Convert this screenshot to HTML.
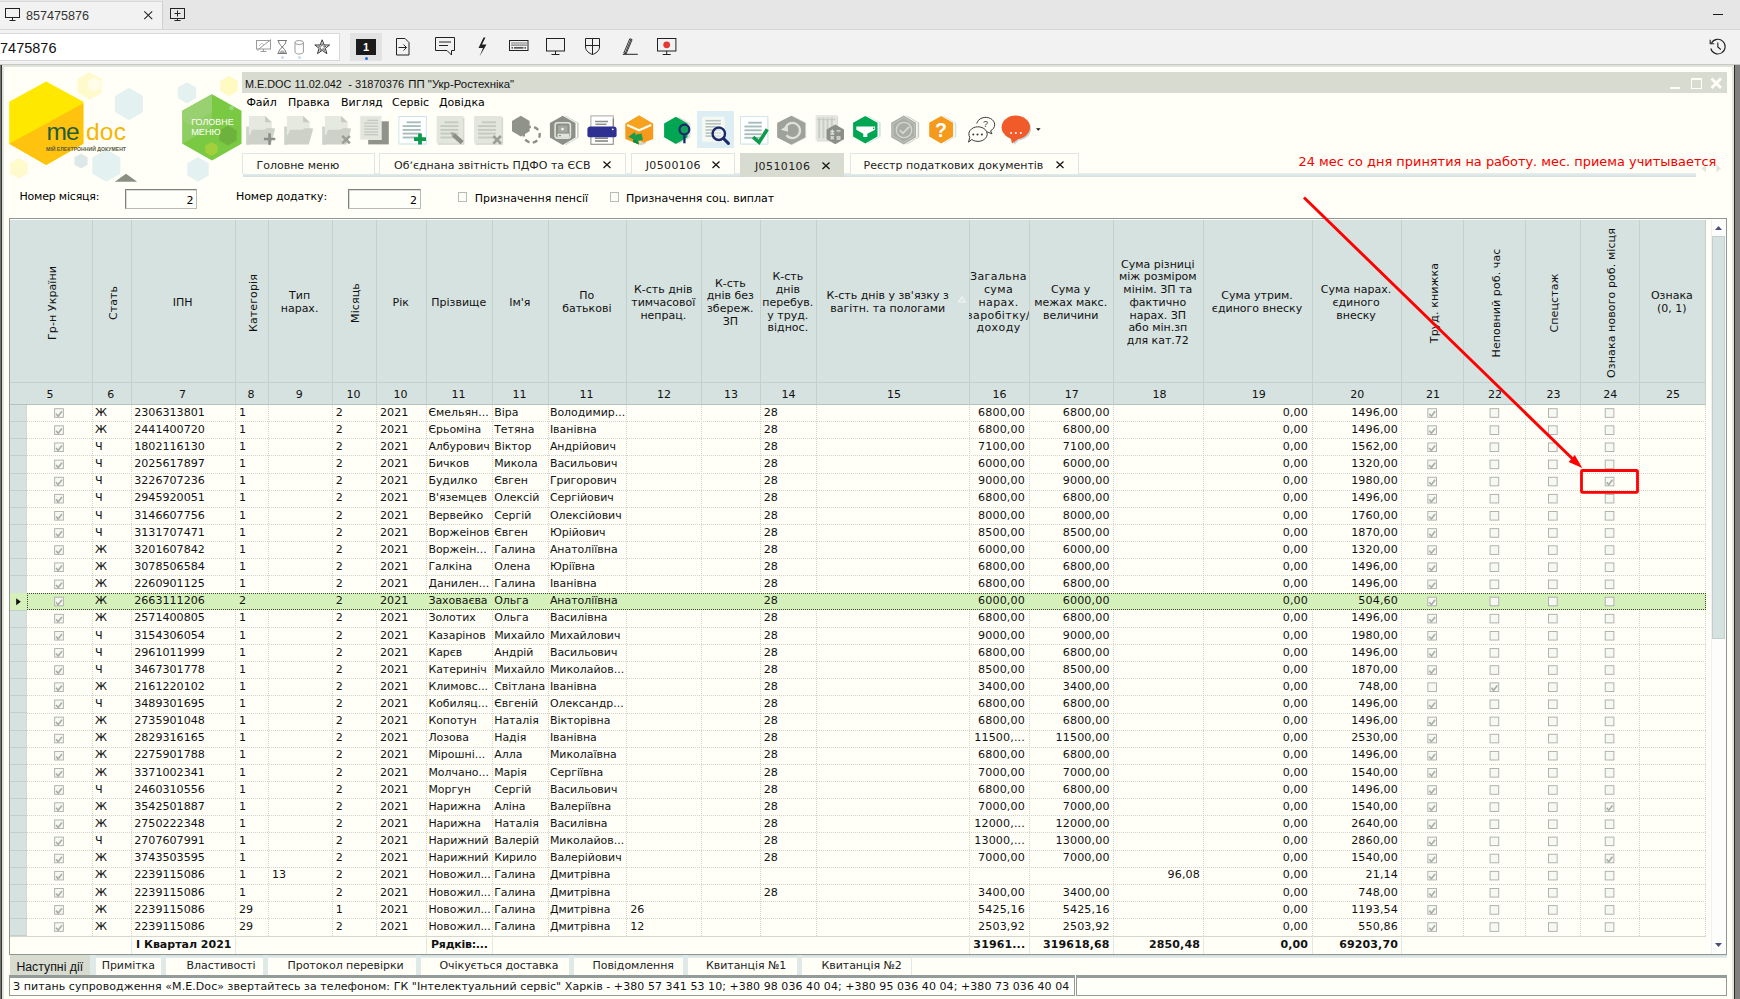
<!DOCTYPE html><html lang="uk"><head><meta charset="utf-8"><title>M.E.Doc</title><style>
*{box-sizing:border-box;margin:0;padding:0}
html,body{width:1740px;height:999px;overflow:hidden;background:#f2f2f2}
body{font-family:"DejaVu Sans","Liberation Sans",sans-serif;font-size:11px;color:#000}
#root{position:relative;width:1740px;height:999px;overflow:hidden}
.a{position:absolute}
.t{position:absolute;white-space:nowrap}
svg{position:absolute;overflow:visible}
/* top chrome */
#tabbar{left:0;top:0;width:1740px;height:30px;background:#e6e6e6}
#tab1{left:0;top:1px;width:163px;height:29px;background:#f2f2f2;border-right:1px solid #cfcfcf;border-top:1px solid #d9d9d9}
#bar2{left:0;top:29px;width:1740px;height:35px;background:#f2f2f2;border-top:1px solid #d6d6d6}
#addr{left:-1px;top:33px;width:341px;height:27.5px;background:#fff;border:1px solid #d9d9d9}
.seg{font-family:"Liberation Sans","DejaVu Sans",sans-serif}
/* app */
#app{left:0;top:64px;width:1740px;height:935px;background:#fffff8}
#title{left:242px;top:72.2px;width:1485px;height:20.4px;background:#d7dbd0}
.mi{top:96.2px;line-height:14px;font-size:11px}
.tab{top:153.2px;height:20.6px;background:#fffff8;border:1px solid #dfe6e3;border-bottom:none;line-height:19px;font-size:11px;color:#222}
.tab.act{background:#d7dbd0;border-color:#d7dbd0;top:153.3px;height:23.4px}
/* grid */
#grid{left:9px;top:218px;width:1718px;height:737px;border:1px solid #8d9794;background:#fffff8}
.hd{background:#d6e2e0}
.vl{position:absolute;width:1px;background:#c3d0cd}
.hl{position:absolute;height:1px;background:#c3d0cd}
.ht{position:absolute;margin-left:-0.7px;text-align:center;font-size:11px;line-height:12.6px;color:#111}
.hn{position:absolute;margin-left:-0.9px;text-align:center;font-size:11px;line-height:14px;top:388px;color:#111}
.vt{position:absolute;white-space:nowrap;font-size:11px;line-height:14px;letter-spacing:0.1px;transform-origin:0 0;transform:rotate(-90deg);color:#111}
.row{position:absolute;left:27px;width:1679px;height:17.63px}
.c{position:absolute;top:1.2px;line-height:14px;font-size:11.12px;white-space:nowrap;color:#111}
.r{text-align:right;letter-spacing:0.13px}
.cb{position:absolute;width:9.8px;height:9.6px;border:1px solid #b3b7af;background:#f6f8f2;top:4.2px}
.b{font-weight:bold}
.inp{background:#fffffa;border:1px solid #b8bbb4;border-top-color:#7e817b;border-left-color:#7e817b;box-shadow:inset 1px 1px 0 #d9dbd4}
.vd{width:0;border-left:1px dotted #d1d3cb}
.row{border-bottom:1px dotted #d1d3cb}
.row.sel{background:#d5f0ba;border:1px dotted #3c4a33;height:17.1px;margin-top:0}
.row.sel .c{top:0.2px}
.row.sel .cb{margin-top:-0.4px;margin-left:-1px}
.row.sel .c{margin-left:-1px}
.row.sel .c.r{margin-right:-1px;margin-left:0}
.x{font-size:10.95px}

</style></head><body><div id="root">
<div class="a" id="tabbar"></div><div class="a" id="tab1"></div>
<svg style="left:5px;top:8px" width="16" height="14" viewBox="0 0 16 14"><rect x="0.5" y="0.5" width="14" height="9" fill="none" stroke="#222" stroke-width="1"/><path d="M7.5 9.500v3M4.500 12.500h6" stroke="#222" stroke-width="1" fill="none"/></svg>
<div class="t seg" style="left:26px;top:8px;font-size:12.6px;line-height:16px;color:#333">857475876</div>
<svg style="left:144px;top:10.7px" width="10" height="10" viewBox="0 0 10 10"><path d="M0.300 0.300L8.200 8.200M8.200 0.300L0.300 8.200" stroke="#222" stroke-width="1.050" fill="none"/></svg>
<svg style="left:170px;top:8px" width="16" height="14" viewBox="0 0 16 14"><rect x="0.5" y="0.5" width="14" height="10" fill="none" stroke="#222" stroke-width="1"/><path d="M7.500 2.500v6M4.500 5.500h6M7.500 10.500v2M4.500 12.500h6" stroke="#222" stroke-width="1" fill="none"/></svg>
<div class="a" style="left:1713px;top:13.7px;width:10px;height:1.4px;background:#1a1a1a"></div>
<div class="a" id="bar2"></div><div class="a" id="addr"></div>
<div class="t seg" style="left:0px;top:38.5px;font-size:14.5px;line-height:18px;color:#111">7475876</div>
<svg style="left:256px;top:39px" width="16" height="15" viewBox="0 0 16 15"><rect x="0.5" y="1.5" width="14" height="8.5" fill="none" stroke="#9a9a9a"/><path d="M7.5 10v2M4.5 12.5h6" stroke="#9a9a9a" fill="none"/><path d="M1 11.5L15 0.5" stroke="#9a9a9a" fill="none"/><path d="M3 7l3-3 2 2 3-3" stroke="#b5b5b5" fill="none" stroke-width="0.8"/></svg>
<svg style="left:277px;top:40px" width="11" height="15" viewBox="0 0 11 15"><path d="M0.5 0.5h9.5M0.5 13.5h9.5M1.5 0.5c0 4 3 5 3.7 6.5c-.7 1.5-3.7 2.5-3.7 6.5M9 0.5c0 4-3 5-3.7 6.5c.7 1.5 3.7 2.5 3.7 6.5" stroke="#777" fill="none" stroke-width="1"/><path d="M2.5 13c.5-2 2-2.500 2.800-2.500s2.300.5 2.800 2.500z" fill="#aaa"/></svg>
<div class="a" style="left:281px;top:56px;width:3px;height:3px;border-radius:2px;background:#c9d9f0"></div>
<svg style="left:294px;top:40px" width="11" height="15" viewBox="0 0 11 15"><ellipse cx="5.2" cy="2.5" rx="4.2" ry="2" fill="none" stroke="#9a9a9a"/><path d="M1 2.500v9.500c0 1.100 1.900 2 4.200 2s4.200-.9 4.200-2v-9.500" fill="none" stroke="#9a9a9a"/></svg>
<div class="a" style="left:298px;top:56px;width:3px;height:3px;border-radius:2px;background:#c9d9f0"></div>
<svg style="left:313.5px;top:39px" width="17" height="16" viewBox="0 0 17 16"><path d="M8.2 0.800l2 5.200h5.400l-4.300 3.300 1.600 5.300-4.700-3.200-4.700 3.200 1.600-5.300-4.300-3.300h5.400z" fill="none" stroke="#333" stroke-width="1"/><path d="M8.200 4.500l1 2.700h2.700l-2.200 1.700.8 2.700-2.300-1.600-2.300 1.600.8-2.700-2.200-1.700h2.700z" fill="none" stroke="#555" stroke-width="0.8"/></svg>
<div class="a" style="left:350px;top:33px;width:32px;height:28px;background:#e3e3e3"></div>
<div class="a seg" style="left:356px;top:39px;width:20px;height:16px;background:#1b1b1b;color:#fff;font-size:12px;line-height:16px;text-align:center;font-weight:bold;font-size:11px">1</div>
<div class="a" style="left:364.5px;top:56.5px;width:3px;height:3px;border-radius:2px;background:#1a6fe0"></div>
<svg style="left:396px;top:38px" width="14" height="18" viewBox="0 0 14 18"><path d="M0.5 0.5h8.500l4 4v12.500h-12.500z" fill="none" stroke="#222"/><path d="M2.500 9.500h8M7.500 6.500l3 3-3 3" fill="none" stroke="#222"/></svg>
<svg style="left:435px;top:37px" width="21" height="20" viewBox="0 0 21 20"><path d="M0.5 0.5h19v13h-3v4.500l-4.500-4.500h-11.500z" fill="none" stroke="#222"/><path d="M4 5h12M4 8.500h9" stroke="#222" fill="none"/></svg>
<svg style="left:477px;top:37px" width="11" height="20" viewBox="0 0 11 20"><path d="M6.500 0.500l-5 10.500h4.500l-3.500 8.500 7-12h-4.500l3.500-7z" fill="#222" stroke="none"/></svg>
<svg style="left:509px;top:40px" width="20" height="12" viewBox="0 0 20 12"><rect x="0.5" y="0.5" width="18.500" height="10" fill="none" stroke="#222"/><path d="M2.500 3h15M2.500 5.200h15" stroke="#222" stroke-dasharray="1.100 0.900" fill="none" stroke-width="1.200"/><path d="M2.500 7.800h1.500M5 7.800h9.500M15.500 7.800h1.500" stroke="#222" fill="none" stroke-width="1.200"/></svg>
<svg style="left:546px;top:38px" width="20" height="18" viewBox="0 0 20 18"><rect x="0.5" y="0.5" width="18" height="12.500" fill="none" stroke="#222"/><path d="M9.500 13v3.500M5.500 16.500h8" stroke="#222" fill="none"/></svg>
<svg style="left:585px;top:38px" width="16" height="18" viewBox="0 0 16 18"><path d="M0.5 0.5h14v8.500c0 4-4 6.500-7 7.500c-3-1-7-3.500-7-7.500z" fill="none" stroke="#222"/><path d="M7.500 0.500v16M0.500 7.500h14" stroke="#222" fill="none"/></svg>
<svg style="left:621px;top:38px" width="18" height="18" viewBox="0 0 18 18"><path d="M2.800 15l6-14.300l2.300 .9l-6 14.300z M4.200 15.400l5.900-14.200" fill="none" stroke="#222" stroke-width="0.900"/><path d="M1.800 16.300h15" stroke="#222" stroke-width="1" fill="none"/></svg>
<svg style="left:657px;top:38px" width="21" height="18" viewBox="0 0 21 18"><rect x="0.5" y="0.5" width="18.400" height="12.500" fill="none" stroke="#222"/><path d="M9.700 13v3.500M5.700 16.500h8" stroke="#222" fill="none"/><circle cx="9.700" cy="6.800" r="3.400" fill="#e53935"/></svg>
<svg style="left:1709px;top:37.8px" width="18" height="18" viewBox="0 0 18 18"><path d="M2.400 5.200a7.300 7.300 0 1 1 -0.600 5.300" fill="none" stroke="#222" stroke-width="1.100"/><path d="M1.200 1.800v4h4" fill="none" stroke="#222" stroke-width="1.100"/><path d="M8.800 4.500v4.500l3 2.500" fill="none" stroke="#222" stroke-width="1.100"/></svg>
<div class="a" id="app"></div>
<div class="a" style="left:0;top:64px;width:1740px;height:3px;background:linear-gradient(#d8dbcf,#e3e6db)"></div>
<div class="a" style="left:0;top:64px;width:4px;height:935px;background:#e1e4d9"></div>
<div class="a" style="left:1732px;top:64px;width:3px;height:935px;background:#e1e4d9"></div>
<div class="a" style="left:0;top:65px;width:2px;height:934px;background:#333"></div>
<div class="a" style="left:0;top:65px;width:1px;height:934px;background:#747474"></div>
<div class="a" style="left:1734px;top:64px;width:6px;height:935px;background:#808080;border-left:1px solid #2b2b2b"></div>
<div class="a" style="left:0;top:64px;width:1740px;height:1px;background:#c9c9c7"></div>
<svg style="left:0;top:64px" width="260" height="125" viewBox="0 64 260 125"><polygon points="89.6,72.2 101.6,79.1 101.6,92.9 89.6,99.8 77.6,92.9 77.6,79.1" fill="#fffacc" /><polygon points="94.3,77.5 100.4,81.0 100.4,88.0 94.3,91.5 88.2,88.0 88.2,81.0" fill="#fffde9" /><polygon points="129.0,87.8 143.0,95.9 143.0,112.1 129.0,120.2 115.0,112.1 115.0,95.9" fill="#e4f1f1" /><polygon points="187.0,82.2 196.2,87.5 196.2,98.1 187.0,103.4 177.8,98.1 177.8,87.5" fill="#e4f1f1" /><polygon points="229.0,75.8 237.8,80.9 237.8,91.1 229.0,96.2 220.2,91.1 220.2,80.9" fill="#fff9c2" /><polygon points="81.0,153.4 87.6,157.2 87.6,164.8 81.0,168.6 74.4,164.8 74.4,157.2" fill="#dde9e8" /><polygon points="106.3,149.4 120.3,157.5 120.3,173.7 106.3,181.8 92.3,173.7 92.3,157.5" fill="#e4f1f1" /><polygon points="18.8,158.1 27.6,163.2 27.6,173.4 18.8,178.5 10.0,173.4 10.0,163.2" fill="#fffacc" /><polygon points="198.0,157.0 208.7,163.2 208.7,175.6 198.0,181.8 187.3,175.6 187.3,163.2" fill="#e4f1f1" /><polygon points="46.2,81.6 83.4,101.8 83.4,143.8 46.2,164.9 9.2,143.8 9.2,101.8" fill="#ffe800"/><polygon points="9.2,143.8 83.4,103.2 83.4,143.8 46.2,164.9" fill="#ffc20e"/><text x="46.5" y="139.6" font-family="Liberation Sans, DejaVu Sans, sans-serif" font-size="24.5" letter-spacing="-1" fill="#1f5c3a">me</text><text x="86" y="139.6" font-family="Liberation Sans, DejaVu Sans, sans-serif" font-size="24.5" letter-spacing="0.2" fill="#f7b500">doc</text><text x="46" y="150.8" font-family="Liberation Sans, DejaVu Sans, sans-serif" font-size="4.9" font-weight="bold" fill="#5a5a40" textLength="80" lengthAdjust="spacingAndGlyphs">МІЙ ЕЛЕКТРОННИЙ ДОКУМЕНТ</text><polygon points="212,94.2 241.5,110.8 241.5,143.8 212,160.4 182.4,143.8 182.4,110.8" fill="#7ac943"/><polygon points="212,94.2 212,127 182.4,143.8 182.4,110.8" fill="#8fce62"/><polygon points="212,94.2 212,112 190,125 182.4,120 182.4,110.8" fill="#9bd275" opacity="0.8"/><polygon points="228.0,125.6 236.7,130.6 236.7,140.6 228.0,145.6 219.3,140.6 219.3,130.6" fill="#6db23c" /><polygon points="211.4,142.0 217.5,145.5 217.5,152.5 211.4,156.0 205.3,152.5 205.3,145.5" fill="#a3cf3a" /><polygon points="231.5,105.4 233.8,106.7 233.8,109.3 231.5,110.6 229.2,109.3 229.2,106.7" fill="#9ad67a" /><text x="191.2" y="125" font-family="Liberation Sans, DejaVu Sans, sans-serif" font-size="9.800" fill="#ffffff" textLength="42.500" lengthAdjust="spacingAndGlyphs">ГОЛОВНЕ</text><text x="191.2" y="134.8" font-family="Liberation Sans, DejaVu Sans, sans-serif" font-size="9.800" fill="#ffffff" textLength="29.500" lengthAdjust="spacingAndGlyphs">МЕНЮ</text><polygon points="126,173.8 137.2,181.8 114.8,181.8" fill="#8a8f84"/></svg>
<div class="a" id="title"></div>
<div class="t seg" style="left:245px;top:77.5px;font-size:10.85px;line-height:13px;color:#111">M.E.DOC 11.02.042</div>
<div class="t seg" style="left:348.3px;top:77.5px;font-size:11.05px;line-height:13px;color:#111">- 31870376</div>
<div class="t seg" style="left:408.3px;top:77.5px;font-size:11.4px;line-height:13px;color:#111">ПП "Укр-Ростехніка"</div>
<div class="a" style="left:1670px;top:87px;width:10px;height:2px;background:#fffff8"></div>
<div class="a" style="left:1691px;top:78px;width:11px;height:11px;border:1px solid #fffff8;border-top-width:2px"></div>
<svg style="left:1710px;top:77px" width="13" height="13" viewBox="0 0 13 13"><path d="M1.5 1.500L11 11M11 1.500L1.500 11" stroke="#fffff8" stroke-width="2.900" fill="none"/></svg>
<div class="t mi" style="left:246.4px">Файл</div>
<div class="t mi" style="left:288px">Правка</div>
<div class="t mi" style="left:341px">Вигляд</div>
<div class="t mi" style="left:392px">Сервіс</div>
<div class="t mi" style="left:439px">Довідка</div>
<div class="a" style="left:697px;top:111px;width:37px;height:37px;background:#dcedf3"></div>
<svg style="left:246px;top:114.5px" width="30" height="31" viewBox="0 0 30 31"><rect x="0.200" y="11.500" width="4" height="18.100" fill="#cfd3ca"/><polygon points="2.900,1.100 19.100,1.100 25.800,7.200 25.800,20 2.900,20" fill="#e6e9e0"/><polygon points="19.100,1.100 25.800,7.200 19.100,7.200" fill="#c7cbc2"/><path d="M0.200 29.600L6.100 14.800H17.200Q19 14.800 20.400 13.600Q21.200 13 22.500 13.100L29.200 13.400L24.900 29.600z" fill="#cdd1c8"/><path d="M23.600 18.300v11.400M17.900 24h11.400" stroke="#8b8f86" stroke-width="2.700" fill="none"/></svg>
<svg style="left:283.7px;top:114.5px" width="30" height="31" viewBox="0 0 30 31"><rect x="0.200" y="11.500" width="4" height="18.100" fill="#cfd3ca"/><polygon points="2.900,1.100 19.100,1.100 25.800,7.200 25.800,20 2.900,20" fill="#e6e9e0"/><polygon points="19.100,1.100 25.800,7.200 19.100,7.200" fill="#c7cbc2"/><path d="M0.200 29.600L6.100 14.800H17.200Q19 14.800 20.400 13.600Q21.200 13 22.500 13.100L29.200 13.400L24.900 29.600z" fill="#cdd1c8"/></svg>
<svg style="left:322px;top:114.5px" width="30" height="31" viewBox="0 0 30 31"><rect x="0.200" y="11.500" width="4" height="18.100" fill="#cfd3ca"/><polygon points="2.900,1.100 19.100,1.100 25.800,7.200 25.800,20 2.900,20" fill="#e6e9e0"/><polygon points="19.100,1.100 25.800,7.200 19.100,7.200" fill="#c7cbc2"/><path d="M0.200 29.600L6.100 14.800H17.200Q19 14.800 20.400 13.600Q21.200 13 22.500 13.100L29.200 13.400L24.900 29.600z" fill="#cdd1c8"/><path d="M20.300 20.800l7.600 7.600M27.900 20.800l-7.600 7.600" stroke="#9a9e95" stroke-width="2.600" fill="none"/></svg>
<svg style="left:361px;top:114.5px" width="30" height="31" viewBox="0 0 30 31"><rect x="7.200" y="6.300" width="20.600" height="23.100" fill="#8f938a"/><rect x="-0.800" y="1.100" width="21" height="23.500" fill="#e3e6dd" stroke="#eceee7" stroke-width="0.800"/><path d="M3.2 8.1H17.1" stroke="#c3c7be" stroke-width="1.3" fill="none"/><path d="M3.2 11.2H17.1" stroke="#c3c7be" stroke-width="1.3" fill="none"/><path d="M3.2 14.1H17.1" stroke="#c3c7be" stroke-width="1.3" fill="none"/><path d="M3.2 17H17.1" stroke="#c3c7be" stroke-width="1.3" fill="none"/><path d="M3.2 19.7H17.1" stroke="#c3c7be" stroke-width="1.3" fill="none"/><path d="M6.3 5.4H17.1" stroke="#c3c7be" stroke-width="1.3" fill="none"/></svg>
<svg style="left:398px;top:114.5px" width="30" height="31" viewBox="0 0 30 31"><rect x="1.600" y="2.200" width="27.400" height="27.400" fill="#e3f0f4"/><rect x="0.900" y="1.500" width="27.400" height="27.400" fill="#ffffff" stroke="#cfe5ec" stroke-width="1"/><path d="M8.6 7.3H22.8" stroke="#a9bcbc" stroke-width="1.9" fill="none"/><path d="M4.7 11.1H22.8" stroke="#a9bcbc" stroke-width="1.9" fill="none"/><path d="M4.7 14.9H22.8" stroke="#a9bcbc" stroke-width="1.9" fill="none"/><path d="M4.7 18.6H22.8" stroke="#a9bcbc" stroke-width="1.9" fill="none"/><path d="M4.7 22.5H22.8" stroke="#a9bcbc" stroke-width="1.9" fill="none"/><path d="M22 18.600v11M16 24.100h12" stroke="#0b9b4a" stroke-width="3.800" fill="none"/></svg>
<svg style="left:436px;top:114.5px" width="30" height="31" viewBox="0 0 30 31"><rect x="2" y="2.500" width="26.400" height="27.300" fill="#d5d9cf"/><rect x="0.600" y="1" width="26.400" height="27.300" fill="#e3e6dd"/><path d="M8.4 7.3H22.4" stroke="#c5c9c0" stroke-width="1.9" fill="none"/><path d="M4.4 11.1H22.4" stroke="#c5c9c0" stroke-width="1.9" fill="none"/><path d="M4.4 14.9H22.4" stroke="#c5c9c0" stroke-width="1.9" fill="none"/><path d="M4.4 18.6H22.4" stroke="#c5c9c0" stroke-width="1.9" fill="none"/><path d="M4.4 22.5H22.4" stroke="#c5c9c0" stroke-width="1.9" fill="none"/><path d="M17.500 19.800l8.700 7.900" stroke="#8b8f86" stroke-width="4.400" fill="none"/><path d="M14.600 17.100l4.800 1-3.300 3.300z" fill="#a3a79e"/></svg>
<svg style="left:474.4px;top:114.5px" width="30" height="31" viewBox="0 0 30 31"><rect x="1.500" y="2.500" width="27.600" height="27.300" fill="#d5d9cf"/><rect x="0.100" y="1" width="27.600" height="27.300" fill="#e3e6dd"/><path d="M8 7.3H22" stroke="#c5c9c0" stroke-width="1.9" fill="none"/><path d="M4 11.1H22" stroke="#c5c9c0" stroke-width="1.9" fill="none"/><path d="M4 14.9H22" stroke="#c5c9c0" stroke-width="1.9" fill="none"/><path d="M4 18.6H22" stroke="#c5c9c0" stroke-width="1.9" fill="none"/><path d="M4 22.5H22" stroke="#c5c9c0" stroke-width="1.9" fill="none"/><path d="M19.300 21l7.600 7.600M26.900 21l-7.600 7.600" stroke="#9a9e95" stroke-width="2.700" fill="none"/></svg>
<svg style="left:511.7px;top:114.5px" width="30" height="31" viewBox="0 0 30 31"><circle cx="19.700" cy="19.700" r="8" fill="none" stroke="#8b8f86" stroke-width="2.400" stroke-dasharray="5 3.380" stroke-dashoffset="2"/><polygon points="8.8,0.7 17.6,5.9 17.6,16.3 8.8,21.5 -0.0,16.3 -0.0,5.9" fill="#8f938a" /></svg>
<svg style="left:549.7px;top:114.5px" width="30" height="31" viewBox="0 0 30 31"><polygon points="15.8,0.7 28.6,8.0 28.6,22.6 15.8,29.9 3.0,22.6 3.0,8.0" fill="#c9ccc4" /><polygon points="14.3,0.7 27.1,8.0 27.1,22.6 14.3,29.9 1.5,22.6 1.5,8.0" fill="#fffff8" /><polygon points="12.7,0.7 25.5,8.0 25.5,22.6 12.7,29.9 -0.1,22.6 -0.1,8.0" fill="#8b8f86" /><rect x="5.100" y="7.800" width="15.300" height="15.500" rx="2.500" fill="none" stroke="#e1e4dc" stroke-width="1.600"/><rect x="7.500" y="18.600" width="11.500" height="4.200" fill="#e1e4dc"/><rect x="8" y="10.500" width="9.500" height="7" fill="#a3a79e"/><circle cx="12.500" cy="14.100" r="1.300" fill="#f3f4ee"/><rect x="9" y="20" width="2" height="1.200" fill="#8b8f86"/></svg>
<svg style="left:587.6px;top:114.5px" width="30" height="31" viewBox="0 0 30 31"><rect x="2.900" y="0.900" width="22.400" height="11.500" fill="#ffffff" stroke="#a5a9a0" stroke-width="1"/><path d="M25.300 3.500v8" stroke="#7d8178" stroke-width="1.200"/><path d="M7 6.5H20" stroke="#8d9189" stroke-width="1.5" fill="none"/><path d="M7.5 9.3H18.5" stroke="#8d9189" stroke-width="1.5" fill="none"/><rect x="2.900" y="20" width="22.400" height="9.300" fill="#ffffff" stroke="#8d9189" stroke-width="1.100"/><path d="M7 23.2H20" stroke="#7d8178" stroke-width="1.5" fill="none"/><path d="M7 26H20" stroke="#7d8178" stroke-width="1.5" fill="none"/><path d="M-0.600 14.500Q-0.600 11.500 2.400 11.500H25.800Q28.600 11.500 28.600 14.500V20.500Q28.600 22.200 26.800 22.200H1.200Q-0.600 22.200 -0.600 20.500z" fill="#2e3192"/><circle cx="24.800" cy="14.300" r="0.900" fill="#ffffff"/></svg>
<svg style="left:625px;top:114.5px" width="30" height="31" viewBox="0 0 30 31"><polygon points="14.100,29.500 21,25.700 21,28.500 16,30.500" fill="#d5d8d0"/><polygon points="14.100,0.600 28.200,8.800 28.200,24.100 14.100,29.500 0.300,24.100 0.300,8.800" fill="#f59a1c"/><polygon points="14.100,0.600 28.200,8.800 14.100,15.300 0.300,8.800" fill="#f7a21f"/><path d="M2.100 9.900L14.100 15.300L26.200 9.900" stroke="#fffbe8" stroke-width="2.200" fill="none"/><polygon points="14.100,29.500 14.100,25 18.500,27.800" fill="#d9dcd4"/><polygon points="3.300,21.700 10,17.100 10.200,19.700 16.500,18.500 18,25 12.500,26 14,29.500 8,27 8.500,24.500" fill="#1a9c4a"/><polygon points="12.500,26 14,29.500 8,27 8.500,24.500" fill="#0e8a3e"/></svg>
<svg style="left:663.8px;top:114.5px" width="30" height="31" viewBox="0 0 30 31"><polygon points="14.8,1.7 26.5,8.5 26.5,22.2 14.8,29.0 3.1,22.2 3.1,8.5" fill="#dcdfd9" /><polygon points="11.8,1.7 23.5,8.5 23.5,22.2 11.8,29.0 0.1,22.2 0.1,8.5" fill="#00a651" /><circle cx="20.400" cy="14.500" r="4.900" fill="#0fa05a" stroke="#1b2a6b" stroke-width="2.200"/><path d="M20.400 20.300v8" stroke="#1b2a6b" stroke-width="2.300" fill="none"/></svg>
<svg style="left:696.7px;top:114.5px" width="36" height="33" viewBox="0 0 36 33"><rect x="6" y="2.500" width="22.400" height="25.100" fill="#e4eeee"/><rect x="5.200" y="1.700" width="22.400" height="25.100" fill="#f6f8f4"/><path d="M8.5 5.7H23.8" stroke="#b7c3bf" stroke-width="1.6" fill="none"/><path d="M8.5 8.8H23.8" stroke="#b7c3bf" stroke-width="1.6" fill="none"/><path d="M8.5 11.8H23.8" stroke="#b7c3bf" stroke-width="1.6" fill="none"/><path d="M8.5 15H23.8" stroke="#b7c3bf" stroke-width="1.6" fill="none"/><path d="M8.5 18.1H23.8" stroke="#b7c3bf" stroke-width="1.6" fill="none"/><path d="M8.5 21.1H23.8" stroke="#b7c3bf" stroke-width="1.6" fill="none"/><circle cx="21.800" cy="18.800" r="6.200" fill="#f1f6f5" fill-opacity="0.550" stroke="#1b2a6b" stroke-width="2.400"/><path d="M26.500 23.500l4.900 4.900" stroke="#1b2a6b" stroke-width="3" stroke-linecap="round" fill="none"/></svg>
<svg style="left:739.6px;top:114.5px" width="30" height="31" viewBox="0 0 30 31"><rect x="1.200" y="2.300" width="27.300" height="27.400" fill="#e3f0f4"/><rect x="0.500" y="1.600" width="27.300" height="27.400" fill="#ffffff" stroke="#cfe5ec" stroke-width="1"/><path d="M8.2 7.7H21.8" stroke="#a9bcbc" stroke-width="1.9" fill="none"/><path d="M4.4 11.5H21.8" stroke="#a9bcbc" stroke-width="1.9" fill="none"/><path d="M4.4 15.3H21.8" stroke="#a9bcbc" stroke-width="1.9" fill="none"/><path d="M4.4 19.2H21.8" stroke="#a9bcbc" stroke-width="1.9" fill="none"/><path d="M4.4 22.8H21.8" stroke="#a9bcbc" stroke-width="1.9" fill="none"/><path d="M13.100 22.100l6 5.200l8.200-13.100" stroke="#0b9b4a" stroke-width="3.500" fill="none"/></svg>
<svg style="left:777px;top:115.6px" width="30" height="31" viewBox="0 0 30 31"><polygon points="14.8,-0.5 29.1,6.8 29.1,21.5 14.8,28.9 0.5,21.5 0.5,6.8" fill="#c9ccc4" /><polygon points="14.1,-0.1 28.0,7.0 28.0,21.4 14.1,28.5 0.2,21.4 0.2,7.0" fill="#9ea29a" /><path d="M8.200 12a7.600 7.600 0 1 1 1.300 7.300" stroke="#dfe2da" stroke-width="2.200" fill="none"/><polygon points="3.600,13.800 10.800,9.200 11,15.800" fill="#dfe2da"/></svg>
<svg style="left:815.7px;top:116px" width="30" height="31" viewBox="0 0 30 31"><rect x="0.800" y="0.300" width="21.300" height="25.200" fill="#d9dcd3"/><rect x="-0.400" y="-0.900" width="21.300" height="25.200" fill="#e4e6df"/><path d="M3.2 1.500V22.500" stroke="#c9cdc4" stroke-width="2"/><path d="M7.4 1.500V22.500" stroke="#c9cdc4" stroke-width="2"/><path d="M11.6 1.500V22.500" stroke="#c9cdc4" stroke-width="2"/><path d="M15.8 1.500V22.500" stroke="#c9cdc4" stroke-width="2"/><path d="M1 3.500H19.500" stroke="#c9cdc4" stroke-width="1.300"/><polygon points="19.3,8.5 28.0,13.5 28.0,23.3 19.3,28.2 10.6,23.3 10.6,13.5" fill="#8b8f87" /><path d="M14.300 15.500h4M16.300 13.600v3.800M14.300 18h4M20.500 14.800h4M22.500 13.400v.1M22.500 16.300v.1M14.700 20.300l3 3M17.700 20.300l-3 3M20.500 21h4M20.500 23h4" stroke="#dfe2da" stroke-width="1.300" fill="none"/></svg>
<svg style="left:853px;top:116px" width="30" height="31" viewBox="0 0 30 31"><polygon points="15.5,-0.1 27.7,6.8 27.7,20.5 15.5,27.4 3.3,20.5 3.3,6.8" fill="#cfe3e6" /><polygon points="13.9,-0.1 26.1,6.8 26.1,20.5 13.9,27.4 1.7,20.5 1.7,6.8" fill="#fffff8" /><polygon points="12.3,-0.1 24.5,6.8 24.5,20.5 12.3,27.4 0.1,20.5 0.1,6.8" fill="#00a651" /><path d="M3.300 10.600h18.800v3.200l-7.800 4v3.300h-4v-3.300l-7-4z" fill="#ffffff"/><path d="M20 11.500h1.300v1.400h-1.300z" fill="#00a651"/></svg>
<svg style="left:891px;top:116px" width="30" height="31" viewBox="0 0 30 31"><polygon points="15.8,-0.4 28.2,6.8 28.2,21.2 15.8,28.4 3.3,21.2 3.3,6.8" fill="#c9ccc4" /><polygon points="14.2,-0.4 26.6,6.8 26.6,21.2 14.2,28.4 1.8,21.2 1.8,6.8" fill="#fffff8" /><polygon points="12.7,-0.4 25.1,6.8 25.1,21.2 12.7,28.4 0.2,21.2 0.2,6.8" fill="#a9ada4" /><polygon points="12.7,1.6 23.4,7.8 23.4,20.2 12.7,26.4 2.0,20.2 2.0,7.8" fill="none" stroke="#c3c6be" stroke-width="0.900"/><circle cx="13" cy="14" r="7.700" fill="none" stroke="#d5d8d0" stroke-width="1.300"/><path d="M8.600 14l3.400 3.200l6.300-6.600" stroke="#d5d8d0" stroke-width="1.700" fill="none"/></svg>
<svg style="left:929px;top:116px" width="30" height="31" viewBox="0 0 30 31"><polygon points="15.3,-0.1 27.3,6.8 27.3,20.5 15.3,27.4 3.4,20.5 3.4,6.8" fill="#cfe3e6" /><polygon points="13.8,-0.1 25.7,6.8 25.7,20.5 13.8,27.4 1.8,20.5 1.8,6.8" fill="#fffff8" /><polygon points="12.2,-0.1 24.1,6.8 24.1,20.5 12.2,27.4 0.2,20.5 0.2,6.8" fill="#f59a1c" /><text x="11.900" y="20.600" text-anchor="middle" font-family="Liberation Sans, DejaVu Sans, sans-serif" font-weight="bold" font-size="19.500" fill="#ffffff">?</text></svg>
<svg style="left:967.5px;top:117.2px" width="30" height="31" viewBox="0 0 30 31"><path d="M8.800 6.500a9 7.300 0 1 1 13.800 7.300l1.300 3l-4.300-1.800a9 7 0 0 1 -3 .3" fill="#fffff8" stroke="#3a3a3a" stroke-width="1"/><path d="M9.700 9.800a9.200 7.300 0 1 1 -5.900 12.700l-3.300 2.600l1.300-4.800a9.200 7.300 0 0 1 7.900 -10.500z" fill="#fffff8" stroke="#3a3a3a" stroke-width="1"/><circle cx="5.300" cy="17.500" r="1.050" fill="#3a3a3a"/><circle cx="9.500" cy="17.500" r="1.050" fill="#3a3a3a"/><circle cx="13.900" cy="17.500" r="1.050" fill="#3a3a3a"/><text x="17.400" y="10" text-anchor="middle" font-family="Liberation Sans, DejaVu Sans, sans-serif" font-size="9" fill="#3a3a3a">?</text></svg>
<svg style="left:1002.3px;top:115.6px" width="30" height="31" viewBox="0 0 30 31"><ellipse cx="15.200" cy="12.700" rx="14" ry="11.700" fill="#c5d5da"/><polygon points="11,23.500 17.500,23.500 12,29" fill="#c5d5da"/><ellipse cx="13.800" cy="11.300" rx="14.200" ry="11.800" fill="#f15a29"/><polygon points="8.500,21 16.500,22.800 10,27.600" fill="#f15a29"/><circle cx="9.100" cy="17.100" r="1" fill="#ffffff"/><circle cx="13.800" cy="17.100" r="1" fill="#ffffff"/><circle cx="18.800" cy="17.100" r="1" fill="#ffffff"/></svg>
<svg style="left:1035.9px;top:128px" width="6" height="4" viewBox="0 0 6 4"><polygon points="0,0.300 4.600,0.300 2.300,2.800" fill="#111"/></svg>
<div class="a" style="left:243px;top:172.6px;width:1453px;height:4.4px;background:linear-gradient(#e6efee,#d3e0df)"></div>
<div class="a tab" style="left:242px;width:132.5px"></div>
<div class="t" style="left:256.5px;top:158.9px;line-height:14px;font-size:11px;color:#222">Головне меню</div>
<div class="a tab" style="left:379px;width:246.5px"></div>
<div class="t" style="left:394px;top:158.9px;line-height:14px;font-size:11px;color:#222">Об&#700;єднана звітність ПДФО та ЄСВ</div>
<svg style="left:603px;top:161px" width="9" height="8" viewBox="0 0 9 8"><path d="M0.5 0.500L7.500 7M7.500 0.500L0.500 7" stroke="#111" stroke-width="1.200" fill="none"/></svg>
<div class="a tab" style="left:631.4px;width:103.4px"></div>
<div class="t" style="left:645.7px;top:158.9px;line-height:14px;font-size:11px;color:#222;letter-spacing:0.38px">J0500106</div>
<svg style="left:712px;top:161px" width="9" height="8" viewBox="0 0 9 8"><path d="M0.5 0.500L7.500 7M7.500 0.500L0.500 7" stroke="#111" stroke-width="1.200" fill="none"/></svg>
<div class="a tab act" style="left:740px;width:103.6px"></div>
<div class="t" style="left:755px;top:160px;line-height:14px;font-size:11px;color:#222;letter-spacing:0.38px">J0510106</div>
<svg style="left:822px;top:161.7px" width="9" height="8" viewBox="0 0 9 8"><path d="M0.5 0.500L7.500 7M7.500 0.500L0.500 7" stroke="#111" stroke-width="1.200" fill="none"/></svg>
<div class="a tab" style="left:849.5px;width:229.4px"></div>
<div class="t" style="left:863.6px;top:158.9px;line-height:14px;font-size:11px;color:#222">Реєстр податкових документів</div>
<svg style="left:1055.6px;top:161px" width="9" height="8" viewBox="0 0 9 8"><path d="M0.5 0.500L7.500 7M7.500 0.500L0.500 7" stroke="#111" stroke-width="1.200" fill="none"/></svg>
<svg style="left:1700px;top:164px" width="24" height="10" viewBox="0 0 24 10"><path d="M6 0.500v8l-4.500-4zM16.500 0.500v8l4.500-4z" fill="#e4e6de"/></svg>
<div class="t" style="left:1298.5px;top:154px;font-size:12.93px;line-height:15px;color:#f40000">24 мес со дня принятия на работу. мес. приема учитывается</div>
<div class="t" style="left:19.5px;top:190px;line-height:14px;letter-spacing:-0.2px">Номер місяця:</div>
<div class="a inp" style="left:125px;top:189px;width:72px;height:20px"></div>
<div class="t" style="left:186.5px;top:193.7px;line-height:14px">2</div>
<div class="t" style="left:236px;top:190px;line-height:14px;letter-spacing:-0.1px">Номер додатку:</div>
<div class="a inp" style="left:348px;top:189px;width:73px;height:20px"></div>
<div class="t" style="left:410px;top:193.7px;line-height:14px">2</div>
<div class="a" style="left:457.5px;top:192px;width:9.800px;height:9.800px;border:1px solid #b9bcb4;background:#fdfdf8"></div>
<div class="t" style="left:474.8px;top:192px;line-height:14px">Призначення пенсії</div>
<div class="a" style="left:609.6px;top:192px;width:9.800px;height:9.800px;border:1px solid #b9bcb4;background:#fdfdf8"></div>
<div class="t" style="left:626px;top:192px;line-height:14px">Призначення соц. виплат</div>
<div class="a" id="grid"></div>
<div class="a hd" style="left:10px;top:219.5px;width:1695.8px;height:185.1px"></div>
<div class="a hd" style="left:10px;top:404.6px;width:16.7px;height:531.2px"></div>
<div class="hl" style="left:10px;top:382.2px;width:1695.8px"></div>
<div class="hl" style="left:10px;top:404.0px;width:1695.8px;background:#b4c2bf"></div>
<div class="vl" style="left:91.8px;top:219.5px;height:185.1px"></div>
<div class="vl" style="left:130.7px;top:219.5px;height:185.1px"></div>
<div class="vl" style="left:234.9px;top:219.5px;height:185.1px"></div>
<div class="vl" style="left:267.8px;top:219.5px;height:185.1px"></div>
<div class="vl" style="left:331.7px;top:219.5px;height:185.1px"></div>
<div class="vl" style="left:376.0px;top:219.5px;height:185.1px"></div>
<div class="vl" style="left:425.8px;top:219.5px;height:185.1px"></div>
<div class="vl" style="left:492.1px;top:219.5px;height:185.1px"></div>
<div class="vl" style="left:547.9px;top:219.5px;height:185.1px"></div>
<div class="vl" style="left:626.1px;top:219.5px;height:185.1px"></div>
<div class="vl" style="left:700.9px;top:219.5px;height:185.1px"></div>
<div class="vl" style="left:760.1px;top:219.5px;height:185.1px"></div>
<div class="vl" style="left:816.0px;top:219.5px;height:185.1px"></div>
<div class="vl" style="left:968.7px;top:219.5px;height:185.1px"></div>
<div class="vl" style="left:1028.7px;top:219.5px;height:185.1px"></div>
<div class="vl" style="left:1113.1px;top:219.5px;height:185.1px"></div>
<div class="vl" style="left:1202.9px;top:219.5px;height:185.1px"></div>
<div class="vl" style="left:1311.6px;top:219.5px;height:185.1px"></div>
<div class="vl" style="left:1400.9px;top:219.5px;height:185.1px"></div>
<div class="vl" style="left:1463.1px;top:219.5px;height:185.1px"></div>
<div class="vl" style="left:1525.3px;top:219.5px;height:185.1px"></div>
<div class="vl" style="left:1579.9px;top:219.5px;height:185.1px"></div>
<div class="vl" style="left:1638.8px;top:219.5px;height:185.1px"></div>
<div class="vl" style="left:1705.3px;top:219.5px;height:185.1px"></div>
<div class="ht" style="left:131.2px;width:104.2px;top:296.8px;line-height:12.75px">ІПН</div>
<div class="ht" style="left:268.3px;width:63.9px;top:290.4px;line-height:12.75px">Тип<br>нарах.</div>
<div class="ht" style="left:376.5px;width:49.8px;top:296.8px;line-height:12.75px">Рік</div>
<div class="ht" style="left:426.3px;width:66.3px;top:296.8px;line-height:12.75px">Прізвище</div>
<div class="ht" style="left:492.6px;width:55.8px;top:296.8px;line-height:12.75px">Ім&#39;я</div>
<div class="ht" style="left:548.4px;width:78.2px;top:290.4px;line-height:12.75px">По<br>батькові</div>
<div class="ht" style="left:626.6px;width:74.8px;top:284.1px;line-height:12.75px">К-сть днів<br>тимчасової<br>непрац.</div>
<div class="ht" style="left:701.4px;width:59.2px;top:277.7px;line-height:12.75px">К-сть<br>днів без<br>збереж.<br>ЗП</div>
<div class="ht" style="left:760.6px;width:55.9px;top:271.3px;line-height:12.75px">К-сть<br>днів<br>перебув.<br>у труд.<br>віднос.</div>
<div class="ht" style="left:816.5px;width:143.7px;top:290.4px;line-height:12.75px">К-сть днів у зв&#39;язку з<br>вагітн. та пологами</div>
<div class="ht" style="left:969.2px;width:60.0px;top:271.3px;line-height:12.75px;overflow:hidden"><div style="margin:0 -10px;letter-spacing:0.4px">Загальна<br>сума<br>нарах.<br>заробітку/<br>доходу</div></div>
<div class="ht" style="left:1029.2px;width:84.4px;top:284.1px;line-height:12.75px">Сума у<br>межах макс.<br>величини</div>
<div class="ht" style="left:1113.6px;width:89.8px;top:258.6px;line-height:12.75px">Сума різниці<br>між розміром<br>мінім. ЗП та<br>фактично<br>нарах. ЗП<br>або мін.зп<br>для кат.72</div>
<div class="ht" style="left:1203.4px;width:108.7px;top:290.4px;line-height:12.75px">Сума утрим.<br>єдиного внеску</div>
<div class="ht" style="left:1312.1px;width:89.3px;top:284.1px;line-height:12.75px">Сума нарах.<br>єдиного<br>внеску</div>
<div class="ht" style="left:1639.3px;width:66.5px;top:290.4px;line-height:12.75px">Ознака<br>(0, 1)</div>
<div class="vt" style="left:52.9px;top:302.5px;transform:translate(-50%,-50%) rotate(-90deg);transform-origin:50% 50%">Гр-н України</div>
<div class="vt" style="left:113.8px;top:302.5px;transform:translate(-50%,-50%) rotate(-90deg);transform-origin:50% 50%">Стать</div>
<div class="vt" style="left:253.9px;top:302.5px;transform:translate(-50%,-50%) rotate(-90deg);transform-origin:50% 50%">Категорія</div>
<div class="vt" style="left:356.4px;top:302.5px;transform:translate(-50%,-50%) rotate(-90deg);transform-origin:50% 50%">Місяць</div>
<div class="vt" style="left:1434.5px;top:302.5px;transform:translate(-50%,-50%) rotate(-90deg);transform-origin:50% 50%">Труд. книжка</div>
<div class="vt" style="left:1496.7px;top:302.5px;transform:translate(-50%,-50%) rotate(-90deg);transform-origin:50% 50%">Неповний роб. час</div>
<div class="vt" style="left:1555.1px;top:302.5px;transform:translate(-50%,-50%) rotate(-90deg);transform-origin:50% 50%">Спецстаж</div>
<div class="vt" style="left:1611.8px;top:302.5px;transform:translate(-50%,-50%) rotate(-90deg);transform-origin:50% 50%">Ознака нового роб. місця</div>
<div class="hn" style="left:9.5px;width:82.8px">5</div>
<div class="hn" style="left:92.3px;width:38.9px">6</div>
<div class="hn" style="left:131.2px;width:104.2px">7</div>
<div class="hn" style="left:235.4px;width:32.9px">8</div>
<div class="hn" style="left:268.3px;width:63.9px">9</div>
<div class="hn" style="left:332.2px;width:44.3px">10</div>
<div class="hn" style="left:376.5px;width:49.8px">10</div>
<div class="hn" style="left:426.3px;width:66.3px">11</div>
<div class="hn" style="left:492.6px;width:55.8px">11</div>
<div class="hn" style="left:548.4px;width:78.2px">11</div>
<div class="hn" style="left:627.5px;width:74.8px">12</div>
<div class="hn" style="left:702.3px;width:59.2px">13</div>
<div class="hn" style="left:761.5px;width:55.9px">14</div>
<div class="hn" style="left:818.5px;width:152.7px">15</div>
<div class="hn" style="left:970.5px;width:60.0px">16</div>
<div class="hn" style="left:1030.5px;width:84.4px">17</div>
<div class="hn" style="left:1115.6px;width:89.8px">18</div>
<div class="hn" style="left:1205.4px;width:108.7px">19</div>
<div class="hn" style="left:1313.4px;width:89.3px">20</div>
<div class="hn" style="left:1402.7px;width:62.2px">21</div>
<div class="hn" style="left:1464.9px;width:62.2px">22</div>
<div class="hn" style="left:1527.1px;width:54.6px">23</div>
<div class="hn" style="left:1581.7px;width:58.9px">24</div>
<div class="hn" style="left:1640.6px;width:66.5px">25</div>
<svg style="left:958px;top:296px" width="8" height="7" viewBox="0 0 8 7"><path d="M4 0.500L7.500 6H0.500z" fill="#dbe6e4" stroke="#f6faf9" stroke-width="0.900"/></svg>
<div class="a vd" style="left:26.2px;top:404.6px;height:531.2px"></div>
<div class="a vd" style="left:91.8px;top:404.6px;height:531.2px"></div>
<div class="a vd" style="left:130.7px;top:404.6px;height:531.2px"></div>
<div class="a vd" style="left:234.9px;top:404.6px;height:531.2px"></div>
<div class="a vd" style="left:267.8px;top:404.6px;height:531.2px"></div>
<div class="a vd" style="left:331.7px;top:404.6px;height:531.2px"></div>
<div class="a vd" style="left:376.0px;top:404.6px;height:531.2px"></div>
<div class="a vd" style="left:425.8px;top:404.6px;height:531.2px"></div>
<div class="a vd" style="left:492.1px;top:404.6px;height:531.2px"></div>
<div class="a vd" style="left:547.9px;top:404.6px;height:531.2px"></div>
<div class="a vd" style="left:626.1px;top:404.6px;height:531.2px"></div>
<div class="a vd" style="left:700.9px;top:404.6px;height:531.2px"></div>
<div class="a vd" style="left:760.1px;top:404.6px;height:531.2px"></div>
<div class="a vd" style="left:816.0px;top:404.6px;height:531.2px"></div>
<div class="a vd" style="left:968.7px;top:404.6px;height:531.2px"></div>
<div class="a vd" style="left:1028.7px;top:404.6px;height:531.2px"></div>
<div class="a vd" style="left:1113.1px;top:404.6px;height:531.2px"></div>
<div class="a vd" style="left:1202.9px;top:404.6px;height:531.2px"></div>
<div class="a vd" style="left:1311.6px;top:404.6px;height:531.2px"></div>
<div class="a vd" style="left:1400.9px;top:404.6px;height:531.2px"></div>
<div class="a vd" style="left:1463.1px;top:404.6px;height:531.2px"></div>
<div class="a vd" style="left:1525.3px;top:404.6px;height:531.2px"></div>
<div class="a vd" style="left:1579.9px;top:404.6px;height:531.2px"></div>
<div class="a vd" style="left:1638.8px;top:404.6px;height:531.2px"></div>
<div class="a vd" style="left:1705.3px;top:404.6px;height:531.2px"></div>
<div class="hl" style="left:10px;top:421.1px;width:16.7px;background:#c3d0cd"></div>
<div class="row" style="top:404.60px">
<span class="c" style="left:68.1px">Ж</span><span class="c" style="left:107.2px">2306313801</span><span class="c" style="left:212.0px">1</span><span class="c" style="left:308.8px">2</span><span class="c" style="left:353.0px">2021</span><span class="c x" style="left:401.4px">Ємельян...</span><span class="c x" style="left:467.2px">Віра</span><span class="c x" style="left:522.9px">Володимир...</span><span class="c" style="left:736.8px">28</span><span class="c r" style="right:681.1px">6800,00</span><span class="c r" style="right:596.4px">6800,00</span><span class="c r" style="right:398.0px">0,00</span><span class="c r" style="right:308.0px">1496,00</span>
</div>
<div class="hl" style="left:10px;top:438.3px;width:16.7px;background:#c3d0cd"></div>
<div class="row" style="top:421.74px">
<span class="c" style="left:68.1px">Ж</span><span class="c" style="left:107.2px">2441400720</span><span class="c" style="left:212.0px">1</span><span class="c" style="left:308.8px">2</span><span class="c" style="left:353.0px">2021</span><span class="c x" style="left:401.4px">Єрьоміна</span><span class="c x" style="left:467.2px">Тетяна</span><span class="c x" style="left:522.9px">Іванівна</span><span class="c" style="left:736.8px">28</span><span class="c r" style="right:681.1px">6800,00</span><span class="c r" style="right:596.4px">6800,00</span><span class="c r" style="right:398.0px">0,00</span><span class="c r" style="right:308.0px">1496,00</span>
</div>
<div class="hl" style="left:10px;top:455.4px;width:16.7px;background:#c3d0cd"></div>
<div class="row" style="top:438.87px">
<span class="c" style="left:68.1px">Ч</span><span class="c" style="left:107.2px">1802116130</span><span class="c" style="left:212.0px">1</span><span class="c" style="left:308.8px">2</span><span class="c" style="left:353.0px">2021</span><span class="c x" style="left:401.4px">Албурович</span><span class="c x" style="left:467.2px">Віктор</span><span class="c x" style="left:522.9px">Андрійович</span><span class="c" style="left:736.8px">28</span><span class="c r" style="right:681.1px">7100,00</span><span class="c r" style="right:596.4px">7100,00</span><span class="c r" style="right:398.0px">0,00</span><span class="c r" style="right:308.0px">1562,00</span>
</div>
<div class="hl" style="left:10px;top:472.5px;width:16.7px;background:#c3d0cd"></div>
<div class="row" style="top:456.00px">
<span class="c" style="left:68.1px">Ч</span><span class="c" style="left:107.2px">2025617897</span><span class="c" style="left:212.0px">1</span><span class="c" style="left:308.8px">2</span><span class="c" style="left:353.0px">2021</span><span class="c x" style="left:401.4px">Бичков</span><span class="c x" style="left:467.2px">Микола</span><span class="c x" style="left:522.9px">Васильович</span><span class="c" style="left:736.8px">28</span><span class="c r" style="right:681.1px">6000,00</span><span class="c r" style="right:596.4px">6000,00</span><span class="c r" style="right:398.0px">0,00</span><span class="c r" style="right:308.0px">1320,00</span>
</div>
<div class="hl" style="left:10px;top:489.7px;width:16.7px;background:#c3d0cd"></div>
<div class="row" style="top:473.14px">
<span class="c" style="left:68.1px">Ч</span><span class="c" style="left:107.2px">3226707236</span><span class="c" style="left:212.0px">1</span><span class="c" style="left:308.8px">2</span><span class="c" style="left:353.0px">2021</span><span class="c x" style="left:401.4px">Будилко</span><span class="c x" style="left:467.2px">Євген</span><span class="c x" style="left:522.9px">Григорович</span><span class="c" style="left:736.8px">28</span><span class="c r" style="right:681.1px">9000,00</span><span class="c r" style="right:596.4px">9000,00</span><span class="c r" style="right:398.0px">0,00</span><span class="c r" style="right:308.0px">1980,00</span>
</div>
<div class="hl" style="left:10px;top:506.8px;width:16.7px;background:#c3d0cd"></div>
<div class="row" style="top:490.28px">
<span class="c" style="left:68.1px">Ч</span><span class="c" style="left:107.2px">2945920051</span><span class="c" style="left:212.0px">1</span><span class="c" style="left:308.8px">2</span><span class="c" style="left:353.0px">2021</span><span class="c x" style="left:401.4px">В'яземцев</span><span class="c x" style="left:467.2px">Олексій</span><span class="c x" style="left:522.9px">Сергійович</span><span class="c" style="left:736.8px">28</span><span class="c r" style="right:681.1px">6800,00</span><span class="c r" style="right:596.4px">6800,00</span><span class="c r" style="right:398.0px">0,00</span><span class="c r" style="right:308.0px">1496,00</span>
</div>
<div class="hl" style="left:10px;top:523.9px;width:16.7px;background:#c3d0cd"></div>
<div class="row" style="top:507.41px">
<span class="c" style="left:68.1px">Ч</span><span class="c" style="left:107.2px">3146607756</span><span class="c" style="left:212.0px">1</span><span class="c" style="left:308.8px">2</span><span class="c" style="left:353.0px">2021</span><span class="c x" style="left:401.4px">Вервейко</span><span class="c x" style="left:467.2px">Сергій</span><span class="c x" style="left:522.9px">Олексійович</span><span class="c" style="left:736.8px">28</span><span class="c r" style="right:681.1px">8000,00</span><span class="c r" style="right:596.4px">8000,00</span><span class="c r" style="right:398.0px">0,00</span><span class="c r" style="right:308.0px">1760,00</span>
</div>
<div class="hl" style="left:10px;top:541.1px;width:16.7px;background:#c3d0cd"></div>
<div class="row" style="top:524.55px">
<span class="c" style="left:68.1px">Ч</span><span class="c" style="left:107.2px">3131707471</span><span class="c" style="left:212.0px">1</span><span class="c" style="left:308.8px">2</span><span class="c" style="left:353.0px">2021</span><span class="c x" style="left:401.4px">Воржеінов</span><span class="c x" style="left:467.2px">Євген</span><span class="c x" style="left:522.9px">Юрійович</span><span class="c" style="left:736.8px">28</span><span class="c r" style="right:681.1px">8500,00</span><span class="c r" style="right:596.4px">8500,00</span><span class="c r" style="right:398.0px">0,00</span><span class="c r" style="right:308.0px">1870,00</span>
</div>
<div class="hl" style="left:10px;top:558.2px;width:16.7px;background:#c3d0cd"></div>
<div class="row" style="top:541.68px">
<span class="c" style="left:68.1px">Ж</span><span class="c" style="left:107.2px">3201607842</span><span class="c" style="left:212.0px">1</span><span class="c" style="left:308.8px">2</span><span class="c" style="left:353.0px">2021</span><span class="c x" style="left:401.4px">Воржеін...</span><span class="c x" style="left:467.2px">Галина</span><span class="c x" style="left:522.9px">Анатоліївна</span><span class="c" style="left:736.8px">28</span><span class="c r" style="right:681.1px">6000,00</span><span class="c r" style="right:596.4px">6000,00</span><span class="c r" style="right:398.0px">0,00</span><span class="c r" style="right:308.0px">1320,00</span>
</div>
<div class="hl" style="left:10px;top:575.4px;width:16.7px;background:#c3d0cd"></div>
<div class="row" style="top:558.82px">
<span class="c" style="left:68.1px">Ж</span><span class="c" style="left:107.2px">3078506584</span><span class="c" style="left:212.0px">1</span><span class="c" style="left:308.8px">2</span><span class="c" style="left:353.0px">2021</span><span class="c x" style="left:401.4px">Галкіна</span><span class="c x" style="left:467.2px">Олена</span><span class="c x" style="left:522.9px">Юріївна</span><span class="c" style="left:736.8px">28</span><span class="c r" style="right:681.1px">6800,00</span><span class="c r" style="right:596.4px">6800,00</span><span class="c r" style="right:398.0px">0,00</span><span class="c r" style="right:308.0px">1496,00</span>
</div>
<div class="hl" style="left:10px;top:592.5px;width:16.7px;background:#c3d0cd"></div>
<div class="row" style="top:575.95px">
<span class="c" style="left:68.1px">Ж</span><span class="c" style="left:107.2px">2260901125</span><span class="c" style="left:212.0px">1</span><span class="c" style="left:308.8px">2</span><span class="c" style="left:353.0px">2021</span><span class="c x" style="left:401.4px">Данилен...</span><span class="c x" style="left:467.2px">Галина</span><span class="c x" style="left:522.9px">Іванівна</span><span class="c" style="left:736.8px">28</span><span class="c r" style="right:681.1px">6800,00</span><span class="c r" style="right:596.4px">6800,00</span><span class="c r" style="right:398.0px">0,00</span><span class="c r" style="right:308.0px">1496,00</span>
</div>
<div class="hl" style="left:10px;top:609.6px;width:16.7px;background:#c3d0cd"></div>
<div class="a" style="left:10px;top:592.7px;width:17.5px;height:17px;background:#d5f0ba"></div>
<div class="row sel" style="top:593.09px">
<span class="c" style="left:68.1px">Ж</span><span class="c" style="left:107.2px">2663111206</span><span class="c" style="left:212.0px">2</span><span class="c" style="left:308.8px">2</span><span class="c" style="left:353.0px">2021</span><span class="c x" style="left:401.4px">Заховаєва</span><span class="c x" style="left:467.2px">Ольга</span><span class="c x" style="left:522.9px">Анатоліївна</span><span class="c" style="left:736.8px">28</span><span class="c r" style="right:681.1px">6000,00</span><span class="c r" style="right:596.4px">6000,00</span><span class="c r" style="right:398.0px">0,00</span><span class="c r" style="right:308.0px">504,60</span>
</div>
<div class="hl" style="left:10px;top:626.8px;width:16.7px;background:#c3d0cd"></div>
<div class="row" style="top:610.22px">
<span class="c" style="left:68.1px">Ж</span><span class="c" style="left:107.2px">2571400805</span><span class="c" style="left:212.0px">1</span><span class="c" style="left:308.8px">2</span><span class="c" style="left:353.0px">2021</span><span class="c x" style="left:401.4px">Золотих</span><span class="c x" style="left:467.2px">Ольга</span><span class="c x" style="left:522.9px">Василівна</span><span class="c" style="left:736.8px">28</span><span class="c r" style="right:681.1px">6800,00</span><span class="c r" style="right:596.4px">6800,00</span><span class="c r" style="right:398.0px">0,00</span><span class="c r" style="right:308.0px">1496,00</span>
</div>
<div class="hl" style="left:10px;top:643.9px;width:16.7px;background:#c3d0cd"></div>
<div class="row" style="top:627.36px">
<span class="c" style="left:68.1px">Ч</span><span class="c" style="left:107.2px">3154306054</span><span class="c" style="left:212.0px">1</span><span class="c" style="left:308.8px">2</span><span class="c" style="left:353.0px">2021</span><span class="c x" style="left:401.4px">Казарінов</span><span class="c x" style="left:467.2px">Михайло</span><span class="c x" style="left:522.9px">Михайлович</span><span class="c" style="left:736.8px">28</span><span class="c r" style="right:681.1px">9000,00</span><span class="c r" style="right:596.4px">9000,00</span><span class="c r" style="right:398.0px">0,00</span><span class="c r" style="right:308.0px">1980,00</span>
</div>
<div class="hl" style="left:10px;top:661.0px;width:16.7px;background:#c3d0cd"></div>
<div class="row" style="top:644.49px">
<span class="c" style="left:68.1px">Ч</span><span class="c" style="left:107.2px">2961011999</span><span class="c" style="left:212.0px">1</span><span class="c" style="left:308.8px">2</span><span class="c" style="left:353.0px">2021</span><span class="c x" style="left:401.4px">Карєв</span><span class="c x" style="left:467.2px">Андрій</span><span class="c x" style="left:522.9px">Васильович</span><span class="c" style="left:736.8px">28</span><span class="c r" style="right:681.1px">6800,00</span><span class="c r" style="right:596.4px">6800,00</span><span class="c r" style="right:398.0px">0,00</span><span class="c r" style="right:308.0px">1496,00</span>
</div>
<div class="hl" style="left:10px;top:678.2px;width:16.7px;background:#c3d0cd"></div>
<div class="row" style="top:661.62px">
<span class="c" style="left:68.1px">Ч</span><span class="c" style="left:107.2px">3467301778</span><span class="c" style="left:212.0px">1</span><span class="c" style="left:308.8px">2</span><span class="c" style="left:353.0px">2021</span><span class="c x" style="left:401.4px">Катериніч</span><span class="c x" style="left:467.2px">Михайло</span><span class="c x" style="left:522.9px">Миколайов...</span><span class="c" style="left:736.8px">28</span><span class="c r" style="right:681.1px">8500,00</span><span class="c r" style="right:596.4px">8500,00</span><span class="c r" style="right:398.0px">0,00</span><span class="c r" style="right:308.0px">1870,00</span>
</div>
<div class="hl" style="left:10px;top:695.3px;width:16.7px;background:#c3d0cd"></div>
<div class="row" style="top:678.76px">
<span class="c" style="left:68.1px">Ж</span><span class="c" style="left:107.2px">2161220102</span><span class="c" style="left:212.0px">1</span><span class="c" style="left:308.8px">2</span><span class="c" style="left:353.0px">2021</span><span class="c x" style="left:401.4px">Климовс...</span><span class="c x" style="left:467.2px">Світлана</span><span class="c x" style="left:522.9px">Іванівна</span><span class="c" style="left:736.8px">28</span><span class="c r" style="right:681.1px">3400,00</span><span class="c r" style="right:596.4px">3400,00</span><span class="c r" style="right:398.0px">0,00</span><span class="c r" style="right:308.0px">748,00</span>
</div>
<div class="hl" style="left:10px;top:712.4px;width:16.7px;background:#c3d0cd"></div>
<div class="row" style="top:695.89px">
<span class="c" style="left:68.1px">Ч</span><span class="c" style="left:107.2px">3489301695</span><span class="c" style="left:212.0px">1</span><span class="c" style="left:308.8px">2</span><span class="c" style="left:353.0px">2021</span><span class="c x" style="left:401.4px">Кобиляц...</span><span class="c x" style="left:467.2px">Євгеній</span><span class="c x" style="left:522.9px">Олександр...</span><span class="c" style="left:736.8px">28</span><span class="c r" style="right:681.1px">6800,00</span><span class="c r" style="right:596.4px">6800,00</span><span class="c r" style="right:398.0px">0,00</span><span class="c r" style="right:308.0px">1496,00</span>
</div>
<div class="hl" style="left:10px;top:729.6px;width:16.7px;background:#c3d0cd"></div>
<div class="row" style="top:713.03px">
<span class="c" style="left:68.1px">Ж</span><span class="c" style="left:107.2px">2735901048</span><span class="c" style="left:212.0px">1</span><span class="c" style="left:308.8px">2</span><span class="c" style="left:353.0px">2021</span><span class="c x" style="left:401.4px">Копотун</span><span class="c x" style="left:467.2px">Наталія</span><span class="c x" style="left:522.9px">Вікторівна</span><span class="c" style="left:736.8px">28</span><span class="c r" style="right:681.1px">6800,00</span><span class="c r" style="right:596.4px">6800,00</span><span class="c r" style="right:398.0px">0,00</span><span class="c r" style="right:308.0px">1496,00</span>
</div>
<div class="hl" style="left:10px;top:746.7px;width:16.7px;background:#c3d0cd"></div>
<div class="row" style="top:730.17px">
<span class="c" style="left:68.1px">Ж</span><span class="c" style="left:107.2px">2829316165</span><span class="c" style="left:212.0px">1</span><span class="c" style="left:308.8px">2</span><span class="c" style="left:353.0px">2021</span><span class="c x" style="left:401.4px">Лозова</span><span class="c x" style="left:467.2px">Надія</span><span class="c x" style="left:522.9px">Іванівна</span><span class="c" style="left:736.8px">28</span><span class="c r" style="right:681.1px">11500,...</span><span class="c r" style="right:596.4px">11500,00</span><span class="c r" style="right:398.0px">0,00</span><span class="c r" style="right:308.0px">2530,00</span>
</div>
<div class="hl" style="left:10px;top:763.8px;width:16.7px;background:#c3d0cd"></div>
<div class="row" style="top:747.30px">
<span class="c" style="left:68.1px">Ж</span><span class="c" style="left:107.2px">2275901788</span><span class="c" style="left:212.0px">1</span><span class="c" style="left:308.8px">2</span><span class="c" style="left:353.0px">2021</span><span class="c x" style="left:401.4px">Мірошні...</span><span class="c x" style="left:467.2px">Алла</span><span class="c x" style="left:522.9px">Миколаївна</span><span class="c" style="left:736.8px">28</span><span class="c r" style="right:681.1px">6800,00</span><span class="c r" style="right:596.4px">6800,00</span><span class="c r" style="right:398.0px">0,00</span><span class="c r" style="right:308.0px">1496,00</span>
</div>
<div class="hl" style="left:10px;top:781.0px;width:16.7px;background:#c3d0cd"></div>
<div class="row" style="top:764.44px">
<span class="c" style="left:68.1px">Ж</span><span class="c" style="left:107.2px">3371002341</span><span class="c" style="left:212.0px">1</span><span class="c" style="left:308.8px">2</span><span class="c" style="left:353.0px">2021</span><span class="c x" style="left:401.4px">Молчано...</span><span class="c x" style="left:467.2px">Марія</span><span class="c x" style="left:522.9px">Сергіївна</span><span class="c" style="left:736.8px">28</span><span class="c r" style="right:681.1px">7000,00</span><span class="c r" style="right:596.4px">7000,00</span><span class="c r" style="right:398.0px">0,00</span><span class="c r" style="right:308.0px">1540,00</span>
</div>
<div class="hl" style="left:10px;top:798.1px;width:16.7px;background:#c3d0cd"></div>
<div class="row" style="top:781.57px">
<span class="c" style="left:68.1px">Ч</span><span class="c" style="left:107.2px">2460310556</span><span class="c" style="left:212.0px">1</span><span class="c" style="left:308.8px">2</span><span class="c" style="left:353.0px">2021</span><span class="c x" style="left:401.4px">Моргун</span><span class="c x" style="left:467.2px">Сергій</span><span class="c x" style="left:522.9px">Васильович</span><span class="c" style="left:736.8px">28</span><span class="c r" style="right:681.1px">6800,00</span><span class="c r" style="right:596.4px">6800,00</span><span class="c r" style="right:398.0px">0,00</span><span class="c r" style="right:308.0px">1496,00</span>
</div>
<div class="hl" style="left:10px;top:815.2px;width:16.7px;background:#c3d0cd"></div>
<div class="row" style="top:798.71px">
<span class="c" style="left:68.1px">Ж</span><span class="c" style="left:107.2px">3542501887</span><span class="c" style="left:212.0px">1</span><span class="c" style="left:308.8px">2</span><span class="c" style="left:353.0px">2021</span><span class="c x" style="left:401.4px">Нарижна</span><span class="c x" style="left:467.2px">Аліна</span><span class="c x" style="left:522.9px">Валеріївна</span><span class="c" style="left:736.8px">28</span><span class="c r" style="right:681.1px">7000,00</span><span class="c r" style="right:596.4px">7000,00</span><span class="c r" style="right:398.0px">0,00</span><span class="c r" style="right:308.0px">1540,00</span>
</div>
<div class="hl" style="left:10px;top:832.4px;width:16.7px;background:#c3d0cd"></div>
<div class="row" style="top:815.84px">
<span class="c" style="left:68.1px">Ж</span><span class="c" style="left:107.2px">2750222348</span><span class="c" style="left:212.0px">1</span><span class="c" style="left:308.8px">2</span><span class="c" style="left:353.0px">2021</span><span class="c x" style="left:401.4px">Нарижна</span><span class="c x" style="left:467.2px">Наталія</span><span class="c x" style="left:522.9px">Василівна</span><span class="c" style="left:736.8px">28</span><span class="c r" style="right:681.1px">12000,...</span><span class="c r" style="right:596.4px">12000,00</span><span class="c r" style="right:398.0px">0,00</span><span class="c r" style="right:308.0px">2640,00</span>
</div>
<div class="hl" style="left:10px;top:849.5px;width:16.7px;background:#c3d0cd"></div>
<div class="row" style="top:832.98px">
<span class="c" style="left:68.1px">Ч</span><span class="c" style="left:107.2px">2707607991</span><span class="c" style="left:212.0px">1</span><span class="c" style="left:308.8px">2</span><span class="c" style="left:353.0px">2021</span><span class="c x" style="left:401.4px">Нарижний</span><span class="c x" style="left:467.2px">Валерій</span><span class="c x" style="left:522.9px">Миколайов...</span><span class="c" style="left:736.8px">28</span><span class="c r" style="right:681.1px">13000,...</span><span class="c r" style="right:596.4px">13000,00</span><span class="c r" style="right:398.0px">0,00</span><span class="c r" style="right:308.0px">2860,00</span>
</div>
<div class="hl" style="left:10px;top:866.6px;width:16.7px;background:#c3d0cd"></div>
<div class="row" style="top:850.11px">
<span class="c" style="left:68.1px">Ж</span><span class="c" style="left:107.2px">3743503595</span><span class="c" style="left:212.0px">1</span><span class="c" style="left:308.8px">2</span><span class="c" style="left:353.0px">2021</span><span class="c x" style="left:401.4px">Нарижний</span><span class="c x" style="left:467.2px">Кирило</span><span class="c x" style="left:522.9px">Валерійович</span><span class="c" style="left:736.8px">28</span><span class="c r" style="right:681.1px">7000,00</span><span class="c r" style="right:596.4px">7000,00</span><span class="c r" style="right:398.0px">0,00</span><span class="c r" style="right:308.0px">1540,00</span>
</div>
<div class="hl" style="left:10px;top:883.8px;width:16.7px;background:#c3d0cd"></div>
<div class="row" style="top:867.25px">
<span class="c" style="left:68.1px">Ж</span><span class="c" style="left:107.2px">2239115086</span><span class="c" style="left:212.0px">1</span><span class="c" style="left:244.9px">13</span><span class="c" style="left:308.8px">2</span><span class="c" style="left:353.0px">2021</span><span class="c x" style="left:401.4px">Новожил...</span><span class="c x" style="left:467.2px">Галина</span><span class="c x" style="left:522.9px">Дмитрівна</span><span class="c r" style="right:506.0px">96,08</span><span class="c r" style="right:398.0px">0,00</span><span class="c r" style="right:308.0px">21,14</span>
</div>
<div class="hl" style="left:10px;top:900.9px;width:16.7px;background:#c3d0cd"></div>
<div class="row" style="top:884.38px">
<span class="c" style="left:68.1px">Ж</span><span class="c" style="left:107.2px">2239115086</span><span class="c" style="left:212.0px">1</span><span class="c" style="left:308.8px">2</span><span class="c" style="left:353.0px">2021</span><span class="c x" style="left:401.4px">Новожил...</span><span class="c x" style="left:467.2px">Галина</span><span class="c x" style="left:522.9px">Дмитрівна</span><span class="c" style="left:736.8px">28</span><span class="c r" style="right:681.1px">3400,00</span><span class="c r" style="right:596.4px">3400,00</span><span class="c r" style="right:398.0px">0,00</span><span class="c r" style="right:308.0px">748,00</span>
</div>
<div class="hl" style="left:10px;top:918.1px;width:16.7px;background:#c3d0cd"></div>
<div class="row" style="top:901.52px">
<span class="c" style="left:68.1px">Ж</span><span class="c" style="left:107.2px">2239115086</span><span class="c" style="left:212.0px">29</span><span class="c" style="left:308.8px">1</span><span class="c" style="left:353.0px">2021</span><span class="c x" style="left:401.4px">Новожил...</span><span class="c x" style="left:467.2px">Галина</span><span class="c x" style="left:522.9px">Дмитрівна</span><span class="c" style="left:603.2px">26</span><span class="c r" style="right:681.1px">5425,16</span><span class="c r" style="right:596.4px">5425,16</span><span class="c r" style="right:398.0px">0,00</span><span class="c r" style="right:308.0px">1193,54</span>
</div>
<div class="hl" style="left:10px;top:935.2px;width:16.7px;background:#c3d0cd"></div>
<div class="row" style="top:918.65px;border-bottom-color:transparent">
<span class="c" style="left:68.1px">Ж</span><span class="c" style="left:107.2px">2239115086</span><span class="c" style="left:212.0px">29</span><span class="c" style="left:308.8px">2</span><span class="c" style="left:353.0px">2021</span><span class="c x" style="left:401.4px">Новожил...</span><span class="c x" style="left:467.2px">Галина</span><span class="c x" style="left:522.9px">Дмитрівна</span><span class="c" style="left:603.2px">12</span><span class="c r" style="right:681.1px">2503,92</span><span class="c r" style="right:596.4px">2503,92</span><span class="c r" style="right:398.0px">0,00</span><span class="c r" style="right:308.0px">550,86</span>
</div>
<svg style="left:0;top:0" width="1740" height="999" viewBox="0 0 1740 999"><rect x="54.65" y="408.70" width="8.7" height="8.6" fill="#f6f8f2" stroke="#a9ada5" stroke-width="0.9"/><path d="M56.05 413.70l2.1 2.5l3.8-4.9" stroke="#a9ada4" stroke-width="1.6" fill="none"/><rect x="1427.85" y="408.70" width="8.7" height="8.6" fill="#f6f8f2" stroke="#a9ada5" stroke-width="0.9"/><path d="M1429.25 413.70l2.1 2.5l3.8-4.9" stroke="#a9ada4" stroke-width="1.6" fill="none"/><rect x="1490.05" y="408.70" width="8.7" height="8.6" fill="#f6f8f2" stroke="#a9ada5" stroke-width="0.9"/><rect x="1548.45" y="408.70" width="8.7" height="8.6" fill="#f6f8f2" stroke="#a9ada5" stroke-width="0.9"/><rect x="1605.20" y="408.70" width="8.7" height="8.6" fill="#f6f8f2" stroke="#a9ada5" stroke-width="0.9"/><rect x="54.65" y="425.84" width="8.7" height="8.6" fill="#f6f8f2" stroke="#a9ada5" stroke-width="0.9"/><path d="M56.05 430.84l2.1 2.5l3.8-4.9" stroke="#a9ada4" stroke-width="1.6" fill="none"/><rect x="1427.85" y="425.84" width="8.7" height="8.6" fill="#f6f8f2" stroke="#a9ada5" stroke-width="0.9"/><path d="M1429.25 430.84l2.1 2.5l3.8-4.9" stroke="#a9ada4" stroke-width="1.6" fill="none"/><rect x="1490.05" y="425.84" width="8.7" height="8.6" fill="#f6f8f2" stroke="#a9ada5" stroke-width="0.9"/><rect x="1548.45" y="425.84" width="8.7" height="8.6" fill="#f6f8f2" stroke="#a9ada5" stroke-width="0.9"/><rect x="1605.20" y="425.84" width="8.7" height="8.6" fill="#f6f8f2" stroke="#a9ada5" stroke-width="0.9"/><rect x="54.65" y="442.97" width="8.7" height="8.6" fill="#f6f8f2" stroke="#a9ada5" stroke-width="0.9"/><path d="M56.05 447.97l2.1 2.5l3.8-4.9" stroke="#a9ada4" stroke-width="1.6" fill="none"/><rect x="1427.85" y="442.97" width="8.7" height="8.6" fill="#f6f8f2" stroke="#a9ada5" stroke-width="0.9"/><path d="M1429.25 447.97l2.1 2.5l3.8-4.9" stroke="#a9ada4" stroke-width="1.6" fill="none"/><rect x="1490.05" y="442.97" width="8.7" height="8.6" fill="#f6f8f2" stroke="#a9ada5" stroke-width="0.9"/><rect x="1548.45" y="442.97" width="8.7" height="8.6" fill="#f6f8f2" stroke="#a9ada5" stroke-width="0.9"/><rect x="1605.20" y="442.97" width="8.7" height="8.6" fill="#f6f8f2" stroke="#a9ada5" stroke-width="0.9"/><rect x="54.65" y="460.11" width="8.7" height="8.6" fill="#f6f8f2" stroke="#a9ada5" stroke-width="0.9"/><path d="M56.05 465.11l2.1 2.5l3.8-4.9" stroke="#a9ada4" stroke-width="1.6" fill="none"/><rect x="1427.85" y="460.11" width="8.7" height="8.6" fill="#f6f8f2" stroke="#a9ada5" stroke-width="0.9"/><path d="M1429.25 465.11l2.1 2.5l3.8-4.9" stroke="#a9ada4" stroke-width="1.6" fill="none"/><rect x="1490.05" y="460.11" width="8.7" height="8.6" fill="#f6f8f2" stroke="#a9ada5" stroke-width="0.9"/><rect x="1548.45" y="460.11" width="8.7" height="8.6" fill="#f6f8f2" stroke="#a9ada5" stroke-width="0.9"/><rect x="1605.20" y="460.11" width="8.7" height="8.6" fill="#f6f8f2" stroke="#a9ada5" stroke-width="0.9"/><rect x="54.65" y="477.24" width="8.7" height="8.6" fill="#f6f8f2" stroke="#a9ada5" stroke-width="0.9"/><path d="M56.05 482.24l2.1 2.5l3.8-4.9" stroke="#a9ada4" stroke-width="1.6" fill="none"/><rect x="1427.85" y="477.24" width="8.7" height="8.6" fill="#f6f8f2" stroke="#a9ada5" stroke-width="0.9"/><path d="M1429.25 482.24l2.1 2.5l3.8-4.9" stroke="#a9ada4" stroke-width="1.6" fill="none"/><rect x="1490.05" y="477.24" width="8.7" height="8.6" fill="#f6f8f2" stroke="#a9ada5" stroke-width="0.9"/><rect x="1548.45" y="477.24" width="8.7" height="8.6" fill="#f6f8f2" stroke="#a9ada5" stroke-width="0.9"/><rect x="1605.20" y="477.24" width="8.7" height="8.6" fill="#f6f8f2" stroke="#a9ada5" stroke-width="0.9"/><path d="M1606.60 482.24l2.1 2.5l3.8-4.9" stroke="#a9ada4" stroke-width="1.6" fill="none"/><rect x="54.65" y="494.38" width="8.7" height="8.6" fill="#f6f8f2" stroke="#a9ada5" stroke-width="0.9"/><path d="M56.05 499.38l2.1 2.5l3.8-4.9" stroke="#a9ada4" stroke-width="1.6" fill="none"/><rect x="1427.85" y="494.38" width="8.7" height="8.6" fill="#f6f8f2" stroke="#a9ada5" stroke-width="0.9"/><path d="M1429.25 499.38l2.1 2.5l3.8-4.9" stroke="#a9ada4" stroke-width="1.6" fill="none"/><rect x="1490.05" y="494.38" width="8.7" height="8.6" fill="#f6f8f2" stroke="#a9ada5" stroke-width="0.9"/><rect x="1548.45" y="494.38" width="8.7" height="8.6" fill="#f6f8f2" stroke="#a9ada5" stroke-width="0.9"/><rect x="1605.20" y="494.38" width="8.7" height="8.6" fill="#f6f8f2" stroke="#a9ada5" stroke-width="0.9"/><rect x="54.65" y="511.51" width="8.7" height="8.6" fill="#f6f8f2" stroke="#a9ada5" stroke-width="0.9"/><path d="M56.05 516.51l2.1 2.5l3.8-4.9" stroke="#a9ada4" stroke-width="1.6" fill="none"/><rect x="1427.85" y="511.51" width="8.7" height="8.6" fill="#f6f8f2" stroke="#a9ada5" stroke-width="0.9"/><path d="M1429.25 516.51l2.1 2.5l3.8-4.9" stroke="#a9ada4" stroke-width="1.6" fill="none"/><rect x="1490.05" y="511.51" width="8.7" height="8.6" fill="#f6f8f2" stroke="#a9ada5" stroke-width="0.9"/><rect x="1548.45" y="511.51" width="8.7" height="8.6" fill="#f6f8f2" stroke="#a9ada5" stroke-width="0.9"/><rect x="1605.20" y="511.51" width="8.7" height="8.6" fill="#f6f8f2" stroke="#a9ada5" stroke-width="0.9"/><rect x="54.65" y="528.65" width="8.7" height="8.6" fill="#f6f8f2" stroke="#a9ada5" stroke-width="0.9"/><path d="M56.05 533.65l2.1 2.5l3.8-4.9" stroke="#a9ada4" stroke-width="1.6" fill="none"/><rect x="1427.85" y="528.65" width="8.7" height="8.6" fill="#f6f8f2" stroke="#a9ada5" stroke-width="0.9"/><path d="M1429.25 533.65l2.1 2.5l3.8-4.9" stroke="#a9ada4" stroke-width="1.6" fill="none"/><rect x="1490.05" y="528.65" width="8.7" height="8.6" fill="#f6f8f2" stroke="#a9ada5" stroke-width="0.9"/><rect x="1548.45" y="528.65" width="8.7" height="8.6" fill="#f6f8f2" stroke="#a9ada5" stroke-width="0.9"/><rect x="1605.20" y="528.65" width="8.7" height="8.6" fill="#f6f8f2" stroke="#a9ada5" stroke-width="0.9"/><rect x="54.65" y="545.78" width="8.7" height="8.6" fill="#f6f8f2" stroke="#a9ada5" stroke-width="0.9"/><path d="M56.05 550.78l2.1 2.5l3.8-4.9" stroke="#a9ada4" stroke-width="1.6" fill="none"/><rect x="1427.85" y="545.78" width="8.7" height="8.6" fill="#f6f8f2" stroke="#a9ada5" stroke-width="0.9"/><path d="M1429.25 550.78l2.1 2.5l3.8-4.9" stroke="#a9ada4" stroke-width="1.6" fill="none"/><rect x="1490.05" y="545.78" width="8.7" height="8.6" fill="#f6f8f2" stroke="#a9ada5" stroke-width="0.9"/><rect x="1548.45" y="545.78" width="8.7" height="8.6" fill="#f6f8f2" stroke="#a9ada5" stroke-width="0.9"/><rect x="1605.20" y="545.78" width="8.7" height="8.6" fill="#f6f8f2" stroke="#a9ada5" stroke-width="0.9"/><rect x="54.65" y="562.92" width="8.7" height="8.6" fill="#f6f8f2" stroke="#a9ada5" stroke-width="0.9"/><path d="M56.05 567.92l2.1 2.5l3.8-4.9" stroke="#a9ada4" stroke-width="1.6" fill="none"/><rect x="1427.85" y="562.92" width="8.7" height="8.6" fill="#f6f8f2" stroke="#a9ada5" stroke-width="0.9"/><path d="M1429.25 567.92l2.1 2.5l3.8-4.9" stroke="#a9ada4" stroke-width="1.6" fill="none"/><rect x="1490.05" y="562.92" width="8.7" height="8.6" fill="#f6f8f2" stroke="#a9ada5" stroke-width="0.9"/><rect x="1548.45" y="562.92" width="8.7" height="8.6" fill="#f6f8f2" stroke="#a9ada5" stroke-width="0.9"/><rect x="1605.20" y="562.92" width="8.7" height="8.6" fill="#f6f8f2" stroke="#a9ada5" stroke-width="0.9"/><rect x="54.65" y="580.05" width="8.7" height="8.6" fill="#f6f8f2" stroke="#a9ada5" stroke-width="0.9"/><path d="M56.05 585.05l2.1 2.5l3.8-4.9" stroke="#a9ada4" stroke-width="1.6" fill="none"/><rect x="1427.85" y="580.05" width="8.7" height="8.6" fill="#f6f8f2" stroke="#a9ada5" stroke-width="0.9"/><path d="M1429.25 585.05l2.1 2.5l3.8-4.9" stroke="#a9ada4" stroke-width="1.6" fill="none"/><rect x="1490.05" y="580.05" width="8.7" height="8.6" fill="#f6f8f2" stroke="#a9ada5" stroke-width="0.9"/><rect x="1548.45" y="580.05" width="8.7" height="8.6" fill="#f6f8f2" stroke="#a9ada5" stroke-width="0.9"/><rect x="1605.20" y="580.05" width="8.7" height="8.6" fill="#f6f8f2" stroke="#a9ada5" stroke-width="0.9"/><rect x="54.65" y="597.19" width="8.7" height="8.6" fill="#f6f8f2" stroke="#a9ada5" stroke-width="0.9"/><path d="M56.05 602.19l2.1 2.5l3.8-4.9" stroke="#a9ada4" stroke-width="1.6" fill="none"/><rect x="1427.85" y="597.19" width="8.7" height="8.6" fill="#f6f8f2" stroke="#a9ada5" stroke-width="0.9"/><path d="M1429.25 602.19l2.1 2.5l3.8-4.9" stroke="#a9ada4" stroke-width="1.6" fill="none"/><rect x="1490.05" y="597.19" width="8.7" height="8.6" fill="#f6f8f2" stroke="#a9ada5" stroke-width="0.9"/><rect x="1548.45" y="597.19" width="8.7" height="8.6" fill="#f6f8f2" stroke="#a9ada5" stroke-width="0.9"/><rect x="1605.20" y="597.19" width="8.7" height="8.6" fill="#f6f8f2" stroke="#a9ada5" stroke-width="0.9"/><rect x="54.65" y="614.32" width="8.7" height="8.6" fill="#f6f8f2" stroke="#a9ada5" stroke-width="0.9"/><path d="M56.05 619.32l2.1 2.5l3.8-4.9" stroke="#a9ada4" stroke-width="1.6" fill="none"/><rect x="1427.85" y="614.32" width="8.7" height="8.6" fill="#f6f8f2" stroke="#a9ada5" stroke-width="0.9"/><path d="M1429.25 619.32l2.1 2.5l3.8-4.9" stroke="#a9ada4" stroke-width="1.6" fill="none"/><rect x="1490.05" y="614.32" width="8.7" height="8.6" fill="#f6f8f2" stroke="#a9ada5" stroke-width="0.9"/><rect x="1548.45" y="614.32" width="8.7" height="8.6" fill="#f6f8f2" stroke="#a9ada5" stroke-width="0.9"/><rect x="1605.20" y="614.32" width="8.7" height="8.6" fill="#f6f8f2" stroke="#a9ada5" stroke-width="0.9"/><rect x="54.65" y="631.46" width="8.7" height="8.6" fill="#f6f8f2" stroke="#a9ada5" stroke-width="0.9"/><path d="M56.05 636.46l2.1 2.5l3.8-4.9" stroke="#a9ada4" stroke-width="1.6" fill="none"/><rect x="1427.85" y="631.46" width="8.7" height="8.6" fill="#f6f8f2" stroke="#a9ada5" stroke-width="0.9"/><path d="M1429.25 636.46l2.1 2.5l3.8-4.9" stroke="#a9ada4" stroke-width="1.6" fill="none"/><rect x="1490.05" y="631.46" width="8.7" height="8.6" fill="#f6f8f2" stroke="#a9ada5" stroke-width="0.9"/><rect x="1548.45" y="631.46" width="8.7" height="8.6" fill="#f6f8f2" stroke="#a9ada5" stroke-width="0.9"/><rect x="1605.20" y="631.46" width="8.7" height="8.6" fill="#f6f8f2" stroke="#a9ada5" stroke-width="0.9"/><rect x="54.65" y="648.59" width="8.7" height="8.6" fill="#f6f8f2" stroke="#a9ada5" stroke-width="0.9"/><path d="M56.05 653.59l2.1 2.5l3.8-4.9" stroke="#a9ada4" stroke-width="1.6" fill="none"/><rect x="1427.85" y="648.59" width="8.7" height="8.6" fill="#f6f8f2" stroke="#a9ada5" stroke-width="0.9"/><path d="M1429.25 653.59l2.1 2.5l3.8-4.9" stroke="#a9ada4" stroke-width="1.6" fill="none"/><rect x="1490.05" y="648.59" width="8.7" height="8.6" fill="#f6f8f2" stroke="#a9ada5" stroke-width="0.9"/><rect x="1548.45" y="648.59" width="8.7" height="8.6" fill="#f6f8f2" stroke="#a9ada5" stroke-width="0.9"/><rect x="1605.20" y="648.59" width="8.7" height="8.6" fill="#f6f8f2" stroke="#a9ada5" stroke-width="0.9"/><rect x="54.65" y="665.73" width="8.7" height="8.6" fill="#f6f8f2" stroke="#a9ada5" stroke-width="0.9"/><path d="M56.05 670.73l2.1 2.5l3.8-4.9" stroke="#a9ada4" stroke-width="1.6" fill="none"/><rect x="1427.85" y="665.73" width="8.7" height="8.6" fill="#f6f8f2" stroke="#a9ada5" stroke-width="0.9"/><path d="M1429.25 670.73l2.1 2.5l3.8-4.9" stroke="#a9ada4" stroke-width="1.6" fill="none"/><rect x="1490.05" y="665.73" width="8.7" height="8.6" fill="#f6f8f2" stroke="#a9ada5" stroke-width="0.9"/><rect x="1548.45" y="665.73" width="8.7" height="8.6" fill="#f6f8f2" stroke="#a9ada5" stroke-width="0.9"/><rect x="1605.20" y="665.73" width="8.7" height="8.6" fill="#f6f8f2" stroke="#a9ada5" stroke-width="0.9"/><rect x="54.65" y="682.86" width="8.7" height="8.6" fill="#f6f8f2" stroke="#a9ada5" stroke-width="0.9"/><path d="M56.05 687.86l2.1 2.5l3.8-4.9" stroke="#a9ada4" stroke-width="1.6" fill="none"/><rect x="1427.85" y="682.86" width="8.7" height="8.6" fill="#f6f8f2" stroke="#a9ada5" stroke-width="0.9"/><rect x="1490.05" y="682.86" width="8.7" height="8.6" fill="#f6f8f2" stroke="#a9ada5" stroke-width="0.9"/><path d="M1491.45 687.86l2.1 2.5l3.8-4.9" stroke="#a9ada4" stroke-width="1.6" fill="none"/><rect x="1548.45" y="682.86" width="8.7" height="8.6" fill="#f6f8f2" stroke="#a9ada5" stroke-width="0.9"/><rect x="1605.20" y="682.86" width="8.7" height="8.6" fill="#f6f8f2" stroke="#a9ada5" stroke-width="0.9"/><rect x="54.65" y="700.00" width="8.7" height="8.6" fill="#f6f8f2" stroke="#a9ada5" stroke-width="0.9"/><path d="M56.05 705.00l2.1 2.5l3.8-4.9" stroke="#a9ada4" stroke-width="1.6" fill="none"/><rect x="1427.85" y="700.00" width="8.7" height="8.6" fill="#f6f8f2" stroke="#a9ada5" stroke-width="0.9"/><path d="M1429.25 705.00l2.1 2.5l3.8-4.9" stroke="#a9ada4" stroke-width="1.6" fill="none"/><rect x="1490.05" y="700.00" width="8.7" height="8.6" fill="#f6f8f2" stroke="#a9ada5" stroke-width="0.9"/><rect x="1548.45" y="700.00" width="8.7" height="8.6" fill="#f6f8f2" stroke="#a9ada5" stroke-width="0.9"/><rect x="1605.20" y="700.00" width="8.7" height="8.6" fill="#f6f8f2" stroke="#a9ada5" stroke-width="0.9"/><rect x="54.65" y="717.13" width="8.7" height="8.6" fill="#f6f8f2" stroke="#a9ada5" stroke-width="0.9"/><path d="M56.05 722.13l2.1 2.5l3.8-4.9" stroke="#a9ada4" stroke-width="1.6" fill="none"/><rect x="1427.85" y="717.13" width="8.7" height="8.6" fill="#f6f8f2" stroke="#a9ada5" stroke-width="0.9"/><path d="M1429.25 722.13l2.1 2.5l3.8-4.9" stroke="#a9ada4" stroke-width="1.6" fill="none"/><rect x="1490.05" y="717.13" width="8.7" height="8.6" fill="#f6f8f2" stroke="#a9ada5" stroke-width="0.9"/><rect x="1548.45" y="717.13" width="8.7" height="8.6" fill="#f6f8f2" stroke="#a9ada5" stroke-width="0.9"/><rect x="1605.20" y="717.13" width="8.7" height="8.6" fill="#f6f8f2" stroke="#a9ada5" stroke-width="0.9"/><rect x="54.65" y="734.27" width="8.7" height="8.6" fill="#f6f8f2" stroke="#a9ada5" stroke-width="0.9"/><path d="M56.05 739.27l2.1 2.5l3.8-4.9" stroke="#a9ada4" stroke-width="1.6" fill="none"/><rect x="1427.85" y="734.27" width="8.7" height="8.6" fill="#f6f8f2" stroke="#a9ada5" stroke-width="0.9"/><path d="M1429.25 739.27l2.1 2.5l3.8-4.9" stroke="#a9ada4" stroke-width="1.6" fill="none"/><rect x="1490.05" y="734.27" width="8.7" height="8.6" fill="#f6f8f2" stroke="#a9ada5" stroke-width="0.9"/><rect x="1548.45" y="734.27" width="8.7" height="8.6" fill="#f6f8f2" stroke="#a9ada5" stroke-width="0.9"/><rect x="1605.20" y="734.27" width="8.7" height="8.6" fill="#f6f8f2" stroke="#a9ada5" stroke-width="0.9"/><rect x="54.65" y="751.40" width="8.7" height="8.6" fill="#f6f8f2" stroke="#a9ada5" stroke-width="0.9"/><path d="M56.05 756.40l2.1 2.5l3.8-4.9" stroke="#a9ada4" stroke-width="1.6" fill="none"/><rect x="1427.85" y="751.40" width="8.7" height="8.6" fill="#f6f8f2" stroke="#a9ada5" stroke-width="0.9"/><path d="M1429.25 756.40l2.1 2.5l3.8-4.9" stroke="#a9ada4" stroke-width="1.6" fill="none"/><rect x="1490.05" y="751.40" width="8.7" height="8.6" fill="#f6f8f2" stroke="#a9ada5" stroke-width="0.9"/><rect x="1548.45" y="751.40" width="8.7" height="8.6" fill="#f6f8f2" stroke="#a9ada5" stroke-width="0.9"/><rect x="1605.20" y="751.40" width="8.7" height="8.6" fill="#f6f8f2" stroke="#a9ada5" stroke-width="0.9"/><rect x="54.65" y="768.54" width="8.7" height="8.6" fill="#f6f8f2" stroke="#a9ada5" stroke-width="0.9"/><path d="M56.05 773.54l2.1 2.5l3.8-4.9" stroke="#a9ada4" stroke-width="1.6" fill="none"/><rect x="1427.85" y="768.54" width="8.7" height="8.6" fill="#f6f8f2" stroke="#a9ada5" stroke-width="0.9"/><path d="M1429.25 773.54l2.1 2.5l3.8-4.9" stroke="#a9ada4" stroke-width="1.6" fill="none"/><rect x="1490.05" y="768.54" width="8.7" height="8.6" fill="#f6f8f2" stroke="#a9ada5" stroke-width="0.9"/><rect x="1548.45" y="768.54" width="8.7" height="8.6" fill="#f6f8f2" stroke="#a9ada5" stroke-width="0.9"/><rect x="1605.20" y="768.54" width="8.7" height="8.6" fill="#f6f8f2" stroke="#a9ada5" stroke-width="0.9"/><rect x="54.65" y="785.67" width="8.7" height="8.6" fill="#f6f8f2" stroke="#a9ada5" stroke-width="0.9"/><path d="M56.05 790.67l2.1 2.5l3.8-4.9" stroke="#a9ada4" stroke-width="1.6" fill="none"/><rect x="1427.85" y="785.67" width="8.7" height="8.6" fill="#f6f8f2" stroke="#a9ada5" stroke-width="0.9"/><path d="M1429.25 790.67l2.1 2.5l3.8-4.9" stroke="#a9ada4" stroke-width="1.6" fill="none"/><rect x="1490.05" y="785.67" width="8.7" height="8.6" fill="#f6f8f2" stroke="#a9ada5" stroke-width="0.9"/><rect x="1548.45" y="785.67" width="8.7" height="8.6" fill="#f6f8f2" stroke="#a9ada5" stroke-width="0.9"/><rect x="1605.20" y="785.67" width="8.7" height="8.6" fill="#f6f8f2" stroke="#a9ada5" stroke-width="0.9"/><rect x="54.65" y="802.81" width="8.7" height="8.6" fill="#f6f8f2" stroke="#a9ada5" stroke-width="0.9"/><path d="M56.05 807.81l2.1 2.5l3.8-4.9" stroke="#a9ada4" stroke-width="1.6" fill="none"/><rect x="1427.85" y="802.81" width="8.7" height="8.6" fill="#f6f8f2" stroke="#a9ada5" stroke-width="0.9"/><path d="M1429.25 807.81l2.1 2.5l3.8-4.9" stroke="#a9ada4" stroke-width="1.6" fill="none"/><rect x="1490.05" y="802.81" width="8.7" height="8.6" fill="#f6f8f2" stroke="#a9ada5" stroke-width="0.9"/><rect x="1548.45" y="802.81" width="8.7" height="8.6" fill="#f6f8f2" stroke="#a9ada5" stroke-width="0.9"/><rect x="1605.20" y="802.81" width="8.7" height="8.6" fill="#f6f8f2" stroke="#a9ada5" stroke-width="0.9"/><path d="M1606.60 807.81l2.1 2.5l3.8-4.9" stroke="#a9ada4" stroke-width="1.6" fill="none"/><rect x="54.65" y="819.94" width="8.7" height="8.6" fill="#f6f8f2" stroke="#a9ada5" stroke-width="0.9"/><path d="M56.05 824.94l2.1 2.5l3.8-4.9" stroke="#a9ada4" stroke-width="1.6" fill="none"/><rect x="1427.85" y="819.94" width="8.7" height="8.6" fill="#f6f8f2" stroke="#a9ada5" stroke-width="0.9"/><path d="M1429.25 824.94l2.1 2.5l3.8-4.9" stroke="#a9ada4" stroke-width="1.6" fill="none"/><rect x="1490.05" y="819.94" width="8.7" height="8.6" fill="#f6f8f2" stroke="#a9ada5" stroke-width="0.9"/><rect x="1548.45" y="819.94" width="8.7" height="8.6" fill="#f6f8f2" stroke="#a9ada5" stroke-width="0.9"/><rect x="1605.20" y="819.94" width="8.7" height="8.6" fill="#f6f8f2" stroke="#a9ada5" stroke-width="0.9"/><rect x="54.65" y="837.08" width="8.7" height="8.6" fill="#f6f8f2" stroke="#a9ada5" stroke-width="0.9"/><path d="M56.05 842.08l2.1 2.5l3.8-4.9" stroke="#a9ada4" stroke-width="1.6" fill="none"/><rect x="1427.85" y="837.08" width="8.7" height="8.6" fill="#f6f8f2" stroke="#a9ada5" stroke-width="0.9"/><path d="M1429.25 842.08l2.1 2.5l3.8-4.9" stroke="#a9ada4" stroke-width="1.6" fill="none"/><rect x="1490.05" y="837.08" width="8.7" height="8.6" fill="#f6f8f2" stroke="#a9ada5" stroke-width="0.9"/><rect x="1548.45" y="837.08" width="8.7" height="8.6" fill="#f6f8f2" stroke="#a9ada5" stroke-width="0.9"/><rect x="1605.20" y="837.08" width="8.7" height="8.6" fill="#f6f8f2" stroke="#a9ada5" stroke-width="0.9"/><rect x="54.65" y="854.21" width="8.7" height="8.6" fill="#f6f8f2" stroke="#a9ada5" stroke-width="0.9"/><path d="M56.05 859.21l2.1 2.5l3.8-4.9" stroke="#a9ada4" stroke-width="1.6" fill="none"/><rect x="1427.85" y="854.21" width="8.7" height="8.6" fill="#f6f8f2" stroke="#a9ada5" stroke-width="0.9"/><path d="M1429.25 859.21l2.1 2.5l3.8-4.9" stroke="#a9ada4" stroke-width="1.6" fill="none"/><rect x="1490.05" y="854.21" width="8.7" height="8.6" fill="#f6f8f2" stroke="#a9ada5" stroke-width="0.9"/><rect x="1548.45" y="854.21" width="8.7" height="8.6" fill="#f6f8f2" stroke="#a9ada5" stroke-width="0.9"/><rect x="1605.20" y="854.21" width="8.7" height="8.6" fill="#f6f8f2" stroke="#a9ada5" stroke-width="0.9"/><path d="M1606.60 859.21l2.1 2.5l3.8-4.9" stroke="#a9ada4" stroke-width="1.6" fill="none"/><rect x="54.65" y="871.35" width="8.7" height="8.6" fill="#f6f8f2" stroke="#a9ada5" stroke-width="0.9"/><path d="M56.05 876.35l2.1 2.5l3.8-4.9" stroke="#a9ada4" stroke-width="1.6" fill="none"/><rect x="1427.85" y="871.35" width="8.7" height="8.6" fill="#f6f8f2" stroke="#a9ada5" stroke-width="0.9"/><path d="M1429.25 876.35l2.1 2.5l3.8-4.9" stroke="#a9ada4" stroke-width="1.6" fill="none"/><rect x="1490.05" y="871.35" width="8.7" height="8.6" fill="#f6f8f2" stroke="#a9ada5" stroke-width="0.9"/><rect x="1548.45" y="871.35" width="8.7" height="8.6" fill="#f6f8f2" stroke="#a9ada5" stroke-width="0.9"/><rect x="1605.20" y="871.35" width="8.7" height="8.6" fill="#f6f8f2" stroke="#a9ada5" stroke-width="0.9"/><rect x="54.65" y="888.48" width="8.7" height="8.6" fill="#f6f8f2" stroke="#a9ada5" stroke-width="0.9"/><path d="M56.05 893.48l2.1 2.5l3.8-4.9" stroke="#a9ada4" stroke-width="1.6" fill="none"/><rect x="1427.85" y="888.48" width="8.7" height="8.6" fill="#f6f8f2" stroke="#a9ada5" stroke-width="0.9"/><path d="M1429.25 893.48l2.1 2.5l3.8-4.9" stroke="#a9ada4" stroke-width="1.6" fill="none"/><rect x="1490.05" y="888.48" width="8.7" height="8.6" fill="#f6f8f2" stroke="#a9ada5" stroke-width="0.9"/><rect x="1548.45" y="888.48" width="8.7" height="8.6" fill="#f6f8f2" stroke="#a9ada5" stroke-width="0.9"/><rect x="1605.20" y="888.48" width="8.7" height="8.6" fill="#f6f8f2" stroke="#a9ada5" stroke-width="0.9"/><rect x="54.65" y="905.62" width="8.7" height="8.6" fill="#f6f8f2" stroke="#a9ada5" stroke-width="0.9"/><path d="M56.05 910.62l2.1 2.5l3.8-4.9" stroke="#a9ada4" stroke-width="1.6" fill="none"/><rect x="1427.85" y="905.62" width="8.7" height="8.6" fill="#f6f8f2" stroke="#a9ada5" stroke-width="0.9"/><path d="M1429.25 910.62l2.1 2.5l3.8-4.9" stroke="#a9ada4" stroke-width="1.6" fill="none"/><rect x="1490.05" y="905.62" width="8.7" height="8.6" fill="#f6f8f2" stroke="#a9ada5" stroke-width="0.9"/><rect x="1548.45" y="905.62" width="8.7" height="8.6" fill="#f6f8f2" stroke="#a9ada5" stroke-width="0.9"/><rect x="1605.20" y="905.62" width="8.7" height="8.6" fill="#f6f8f2" stroke="#a9ada5" stroke-width="0.9"/><rect x="54.65" y="922.75" width="8.7" height="8.6" fill="#f6f8f2" stroke="#a9ada5" stroke-width="0.9"/><path d="M56.05 927.75l2.1 2.5l3.8-4.9" stroke="#a9ada4" stroke-width="1.6" fill="none"/><rect x="1427.85" y="922.75" width="8.7" height="8.6" fill="#f6f8f2" stroke="#a9ada5" stroke-width="0.9"/><path d="M1429.25 927.75l2.1 2.5l3.8-4.9" stroke="#a9ada4" stroke-width="1.6" fill="none"/><rect x="1490.05" y="922.75" width="8.7" height="8.6" fill="#f6f8f2" stroke="#a9ada5" stroke-width="0.9"/><rect x="1548.45" y="922.75" width="8.7" height="8.6" fill="#f6f8f2" stroke="#a9ada5" stroke-width="0.9"/><rect x="1605.20" y="922.75" width="8.7" height="8.6" fill="#f6f8f2" stroke="#a9ada5" stroke-width="0.9"/></svg>
<svg style="left:16.4px;top:597.7px" width="6" height="8" viewBox="0 0 6 8"><path d="M0.200 0.300L4.800 3.800L0.200 7.300z" fill="#111"/></svg>
<div class="hl" style="left:10px;top:936.2px;width:1695.8px;background:#d3d7ce"></div>
<div class="vl" style="left:130.7px;top:935.8px;height:18px;background:#e6e8e0"></div>
<div class="vl" style="left:234.9px;top:935.8px;height:18px;background:#e6e8e0"></div>
<div class="vl" style="left:425.8px;top:935.8px;height:18px;background:#e6e8e0"></div>
<div class="vl" style="left:492.1px;top:935.8px;height:18px;background:#e6e8e0"></div>
<div class="vl" style="left:968.7px;top:935.8px;height:18px;background:#e6e8e0"></div>
<div class="vl" style="left:1028.7px;top:935.8px;height:18px;background:#e6e8e0"></div>
<div class="vl" style="left:1113.1px;top:935.8px;height:18px;background:#e6e8e0"></div>
<div class="vl" style="left:1202.9px;top:935.8px;height:18px;background:#e6e8e0"></div>
<div class="vl" style="left:1311.6px;top:935.8px;height:18px;background:#e6e8e0"></div>
<div class="vl" style="left:1400.9px;top:935.8px;height:18px;background:#e6e8e0"></div>
<div class="t b" style="left:136px;top:938.0px;line-height:14px;color:#111">І Квартал 2021</div>
<div class="t b" style="left:431px;top:938.0px;line-height:14px;color:#111"><span style="letter-spacing:-0.25px">Рядків:...</span></div>
<div class="t b r" style="right:714.8px;top:938.0px;line-height:14px;color:#111">31961...</div>
<div class="t b r" style="right:630.4px;top:938.0px;line-height:14px;color:#111">319618,68</div>
<div class="t b r" style="right:540.0px;top:938.0px;line-height:14px;color:#111">2850,48</div>
<div class="t b r" style="right:431.9px;top:938.0px;line-height:14px;color:#111">0,00</div>
<div class="t b r" style="right:342.0px;top:938.0px;line-height:14px;color:#111">69203,70</div>
<div class="a" style="left:1710.500px;top:219.5px;width:15.500px;height:734.500px;background:#fdfefb;border-left:1px solid #eaf3f2"></div>
<div class="a" style="left:1711.500px;top:236px;width:13.500px;height:403px;background:#d6e2e0;border:1px solid #c2cfcc"></div>
<svg style="left:1714.5px;top:226px" width="7" height="4" viewBox="0 0 7 4"><path d="M3.500 0L7 4H0z" fill="#4b4d7c"/></svg>
<svg style="left:1714.5px;top:943px" width="7" height="4" viewBox="0 0 7 4"><path d="M3.500 4L7 0H0z" fill="#4b4d7c"/></svg>
<div class="a" style="left:9.500px;top:955px;width:1717.500px;height:3px;background:linear-gradient(#d0dcda,#e8f0ef)"></div>
<div class="a" style="left:89.6px;top:955px;width:6.1px;height:20px;background:#dfe9e8"></div>
<div class="a" style="left:161px;top:955px;width:5.0px;height:20px;background:#dfe9e8"></div>
<div class="a" style="left:262.5px;top:955px;width:5.0px;height:20px;background:#dfe9e8"></div>
<div class="a" style="left:416px;top:955px;width:5.0px;height:20px;background:#dfe9e8"></div>
<div class="a" style="left:569px;top:955px;width:5.0px;height:20px;background:#dfe9e8"></div>
<div class="a" style="left:683px;top:955px;width:5.0px;height:20px;background:#dfe9e8"></div>
<div class="a" style="left:797px;top:955px;width:5.0px;height:20px;background:#dfe9e8"></div>
<div class="a" style="left:911px;top:955px;width:1.200px;height:20px;background:#dfe9e8"></div>
<div class="a" style="left:9.5px;top:954.8px;width:80.1px;height:20.200px;background:#d7dbd0"></div>
<div class="t seg" style="left:16.4px;top:959.8px;line-height:14px;font-size:12.3px;color:#111">Наступні дії</div>
<div class="t" style="left:101.7px;top:958.7px;line-height:14px;font-size:11px;color:#222;letter-spacing:-0.05px">Примітка</div>
<div class="t" style="left:186.5px;top:958.7px;line-height:14px;font-size:11px;color:#222;letter-spacing:-0.05px">Властивості</div>
<div class="t" style="left:287.5px;top:958.7px;line-height:14px;font-size:11px;color:#222;letter-spacing:-0.05px">Протокол перевірки</div>
<div class="t" style="left:439.5px;top:958.7px;line-height:14px;font-size:11px;color:#222;letter-spacing:-0.05px">Очікується доставка</div>
<div class="t" style="left:592.5px;top:958.7px;line-height:14px;font-size:11px;color:#222;letter-spacing:-0.05px">Повідомлення</div>
<div class="t" style="left:706px;top:958.7px;line-height:14px;font-size:11px;color:#222;letter-spacing:-0.05px">Квитанція №1</div>
<div class="t" style="left:821.5px;top:958.7px;line-height:14px;font-size:11px;color:#222;letter-spacing:-0.05px">Квитанція №2</div>
<div class="a" style="left:9.200px;top:974.900px;width:1066px;height:21px;border:1px solid #949c98;border-top:3px solid #939c98;background:#fffffa"></div>
<div class="a" style="left:1076.200px;top:974.900px;width:651px;height:21px;border:1px solid #949c98;border-top:3px solid #939c98;background:#fffffa"></div>
<div class="t" style="left:13px;top:980.400px;line-height:14px;font-size:11px;color:#111;letter-spacing:0.07px">З питань супроводження «M.E.Doc» звертайтесь за телефоном: ГК "Інтелектуальний сервіс" Харків - +380 57 341 53 10; +380 98 036 40 04; +380 95 036 40 04; +380 73 036 40 04</div>
<svg style="left:0;top:0" width="1740" height="999" viewBox="0 0 1740 999"><path d="M1304 197.500L1574 460.300" stroke="#ff0000" stroke-width="2.900" fill="none"/><polygon points="1582.300,468 1568.600,462 1574.800,455" fill="#ff0000"/><rect x="1581.500" y="470.500" width="56" height="21.800" rx="1.200" fill="none" stroke="#ff0000" stroke-width="2.800"/></svg>
</div></body></html>
